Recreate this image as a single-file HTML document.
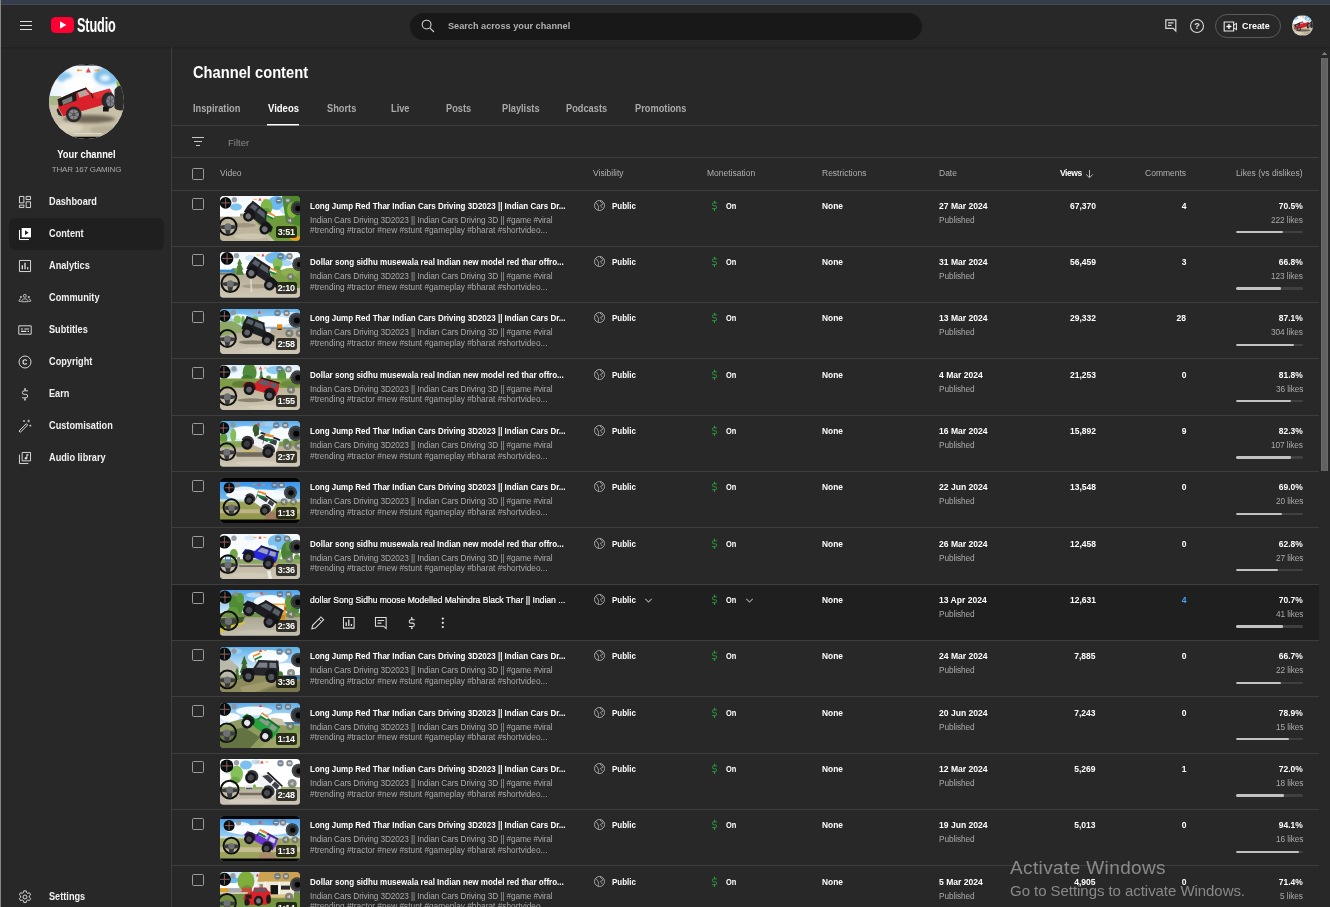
<!DOCTYPE html>
<html lang="en"><head><meta charset="utf-8"><title>Channel content - YouTube Studio</title>
<style>
*{box-sizing:border-box;margin:0;padding:0}
html,body{width:1330px;height:907px;overflow:hidden;background:#282828}
body{position:relative;font-family:"Liberation Sans",sans-serif;color:#fff;-webkit-font-smoothing:antialiased}
.abs{position:absolute}
#topstrip{position:absolute;left:0;top:0;width:1330px;height:4px;background:#353d4d}
#topline{position:absolute;left:0;top:4px;width:1330px;height:1px;background:#454a54}
#leftstrip{position:absolute;left:0;top:0;width:1px;height:907px;background:#858585}
#hdr{position:absolute;left:1px;top:5px;width:1329px;height:42px;background:#282828;box-shadow:0 1px 2px rgba(0,0,0,.25)}
#side{position:absolute;left:1px;top:47px;width:171px;height:860px;border-right:1px solid #3d3d3d}
.ham{position:absolute;left:20px;width:12px;height:1px;background:#e0e0e0}
#ytlogo{position:absolute;left:51px;top:17px;width:23px;height:16px}
#studio{position:absolute;left:76.500px;top:14px;font-weight:bold;font-size:19.500px;line-height:22px;transform-origin:0 50%;transform:scaleX(.65);letter-spacing:-.2px;white-space:nowrap}
#search{position:absolute;left:410px;top:13px;width:512px;height:27px;border-radius:13.5px;background:#181818}
#search span{position:absolute;left:37.500px;top:6.300px;font-size:9.600px;line-height:14px;color:#b0b0b0;font-weight:bold;white-space:nowrap;transform-origin:0 50%;transform:scaleX(.955)}
#create{position:absolute;left:1215px;top:14px;width:66px;height:23.500px;border:1px solid #5a5a5a;border-radius:12px}
#create span{position:absolute;left:25.700px;top:4px;font-size:9.500px;line-height:13px;font-weight:bold;transform-origin:0 50%;transform:scaleX(.94)}
.nav{position:absolute;left:49px;font-size:10px;line-height:14px;font-weight:bold;white-space:nowrap;color:#f1f1f1;transform-origin:0 50%;transform:scaleX(.918)}
.navic{position:absolute;left:17px;width:16px;height:16px}
#sel{position:absolute;left:8.500px;top:218px;width:155px;height:32px;border-radius:6px;background:#1f1f1f}
#yourch{position:absolute;left:1px;width:171px;text-align:center;top:148px;font-size:10px;line-height:14px;font-weight:bold;transform:scaleX(.931)}
#chname{position:absolute;left:1px;width:171px;text-align:center;top:163.500px;font-size:8px;line-height:11px;color:#aaa;letter-spacing:-.16px}
#h1{position:absolute;left:193px;top:61.800px;font-size:16.500px;line-height:21px;font-weight:bold;white-space:nowrap;transform-origin:0 50%;transform:scaleX(.89)}
.tab{position:absolute;top:102px;font-size:10px;line-height:14px;font-weight:bold;color:#aaa;white-space:nowrap;transform-origin:0 50%;transform:scaleX(.925)}
.tab.on{color:#fff}
.hl{position:absolute;left:172px;width:1147px;height:1px;background:#3e3e3e}
#tabul{position:absolute;left:267px;top:124px;width:32px;height:1px;background:#fff}
#tabul2{position:absolute;left:267px;top:125px;width:32px;height:1px;background:#9a9a9a}
#filter{position:absolute;left:228px;top:136px;font-size:9.5px;line-height:13px;color:#888;white-space:nowrap}
.ch{position:absolute;top:167.500px;font-size:8.500px;line-height:11px;color:#b0b0b0;white-space:nowrap}
.ch.r{text-align:right}
.row{position:absolute;left:172px;width:1147px;height:56.33px}
.rl{position:absolute;left:0;width:1147px;height:1px;background:#3e3e3e}
.hbg{position:absolute;left:0;width:1147px;background:#1f1f1f}
.cb{position:absolute;left:20px;top:8px;width:12px;height:12px;border:1px solid #9a9a9a;border-radius:1.500px}
.th{position:absolute;left:48px;top:6px;width:80px;height:45.330px;border-radius:4px;overflow:hidden;background:#888}
.th svg{position:absolute;left:0;top:0;width:80px;height:100%;display:block}
.dur{position:absolute;right:3.500px;bottom:3.500px;width:20.500px;height:12.200px;border-radius:2.500px;background:rgba(12,12,8,.78);color:#fff;font-size:9px;line-height:12.400px;font-weight:bold;text-align:center;letter-spacing:-.25px}
.ttl{position:absolute;left:138px;top:9.700px;font-size:9.800px;line-height:12px;font-weight:bold;white-space:nowrap;transform-origin:0 50%;transform:scaleX(0.813)}
.d1,.d2{position:absolute;left:138px;font-size:8.300px;line-height:10.670px;color:#aaa;white-space:nowrap}
.d1{top:24.750px;letter-spacing:-.12px}
.d2{top:35.250px}
.c{position:absolute;top:9.700px;font-size:9.800px;line-height:12px;font-weight:bold;white-space:nowrap;transform-origin:0 50%;transform:scaleX(0.854)}
.s{position:absolute;top:24.600px;font-size:8.300px;line-height:11px;color:#aaa;white-space:nowrap;letter-spacing:-.1px}
.vis{left:440px;transform:scaleX(0.811)}
.mon{left:554px;transform:scaleX(0.759)}
.res{left:650px}
.date{left:767px;transform:scaleX(0.875)}
.pub{left:767px}
.r{text-align:right;transform-origin:100% 50%}
.views{right:223px;transform:scaleX(0.868)}
.com{right:133px;transform:scaleX(0.868)}
.pct{right:16px;transform:scaleX(0.864)}
.lk{right:16px}
.blue{color:#3ea6ff}
.bar{position:absolute;left:1064px;top:41px;width:67px;height:2.200px;border-radius:1.200px;background:#404040;overflow:hidden}
.bar i{display:block;height:100%;background:#c2c2c2;border-radius:1.200px}
.ic-globe{position:absolute;left:421px;top:8.500px;width:13px;height:13px}
.ic-dol{position:absolute;left:536.300px;top:8.500px;width:13px;height:13px}
.chev{position:absolute;top:10.500px;width:11px;height:11px}
.hi{position:absolute;top:30.200px;width:15.600px;height:15.600px;margin-left:-1px}
#sbtrack{display:none}
#sbthumb{position:absolute;left:1321px;top:58px;width:7px;height:413px;background:#626262;box-shadow:inset 1px 0 0 #6c6c6c,inset -1px 0 0 #6c6c6c}
#wm1{position:absolute;left:1010px;top:856.200px;font-size:19px;line-height:24px;color:rgba(160,160,160,.8);white-space:nowrap;letter-spacing:.38px}
#wm2{position:absolute;left:1010px;top:881px;font-size:15px;line-height:20px;color:rgba(160,160,160,.8);white-space:nowrap;letter-spacing:-.05px}
.row.hov .ttl{font-weight:normal;-webkit-text-stroke:.22px #fff}
.s,.d1,.d2,.ch,#chname,#filter,#wm1,#wm2,.dur{transform:scaleX(.9995)}

</style></head><body>
<svg width="0" height="0" style="position:absolute"><defs><filter id="tb" x="-5%" y="-5%" width="110%" height="110%"><feGaussianBlur stdDeviation=".7"/></filter><filter id="tc" x="-5%" y="-5%" width="110%" height="110%"><feGaussianBlur stdDeviation=".25"/></filter></defs></svg>
<div id="hdr"></div>
<div id="side"></div>
<div id="topstrip"></div><div id="topline"></div><div id="leftstrip"></div>

<!-- header -->
<div class="ham" style="top:21px"></div><div class="ham" style="top:25px"></div><div class="ham" style="top:29px"></div>
<svg id="ytlogo" viewBox="0 0 23 16"><rect x="0" y="0" width="23" height="16" rx="4.500" ry="4.500" fill="#ff0033"/><path d="M9 4.300L15.300 8 9 11.700z" fill="#fff"/></svg>
<div id="studio">Studio</div>
<div id="search"><svg class="abs" style="left:9.700px;top:5.300px;width:16px;height:16px" viewBox="0 0 16 16"><circle cx="6.600" cy="6.600" r="4.400" fill="none" stroke="#d0d0d0" stroke-width="1.100"/><path d="M9.800 9.800L14 14" stroke="#d0d0d0" stroke-width="1.100"/></svg><span>Search across your channel</span></div>
<svg class="abs" style="left:1164px;top:18px;width:14px;height:15px" viewBox="0 0 14 15"><path d="M1.800 1.800h10v11.200l-2.600-2.600H1.800z" fill="none" stroke="#d8d8d8" stroke-width="1.200"/><path d="M4 4.800h5.500M4 7.300h3.500" stroke="#d8d8d8" stroke-width="1.200"/></svg>
<svg class="abs" style="left:1189px;top:18px;width:16px;height:16px;transform:scaleX(.9995)" viewBox="0 0 16 16"><circle cx="8" cy="8" r="6.500" fill="none" stroke="#d8d8d8" stroke-width="1.100"/><text x="8" y="11.200" text-anchor="middle" font-family="Liberation Sans, sans-serif" font-weight="bold" font-size="9" fill="#e0e0e0">?</text></svg>
<div id="create"><svg class="abs" style="left:7px;top:4.500px;width:15px;height:13px" viewBox="0 0 16 14"><path d="M1.200 2.200h10.200v9.600H1.200z" fill="none" stroke="#e8e8e8" stroke-width="1.200"/><path d="M11.400 5.500l3-1.800v6.600l-3-1.800" fill="none" stroke="#e8e8e8" stroke-width="1.100"/><path d="M6.300 4.300v5.400M3.600 7h5.400" stroke="#fff" stroke-width="1.400"/></svg><span>Create</span></div>
<svg class="abs" style="left:1291.500px;top:15.300px;width:21px;height:21px" viewBox="0 0 75 75"><use href="#avatar" width="75" height="75"/></svg>

<!-- sidebar -->
<svg class="abs" style="left:48.500px;top:63.500px;width:75px;height:75px" viewBox="0 0 75 75"><defs><clipPath id="avb"><circle cx="37.500" cy="37.500" r="37.500"/></clipPath><radialGradient id="sky0" cx=".45" cy=".35" r=".7"><stop offset="0" stop-color="#ffffff"/><stop offset=".55" stop-color="#eef6fb"/><stop offset="1" stop-color="#9fd0f0"/></radialGradient><filter id="bl" x="-10%" y="-10%" width="120%" height="120%"><feGaussianBlur stdDeviation="1.600"/></filter>
<symbol id="avatar" viewBox="0 0 75 75"><g clip-path="url(#avb)"><rect width="75" height="75" fill="url(#sky0)"/><g filter="url(#bl)"><ellipse cx="15" cy="13" rx="8" ry="5" fill="#8cc8ee"/><ellipse cx="58" cy="12" rx="13" ry="9" fill="#7fc0ec"/><ellipse cx="56" cy="14" rx="5" ry="3" fill="#e8f4fb"/><ellipse cx="30" cy="20" rx="16" ry="7" fill="#fff"/></g><rect y="34" width="75" height="41" fill="#c9c0a8"/><path d="M0 32h12v9H0z" fill="#a9b88c"/><path d="M67 18l5-3 3 8-6 2z" fill="#8fba3c"/><g filter="url(#bl)"><ellipse cx="40" cy="55" rx="26" ry="4" fill="#6f6656"/><ellipse cx="20" cy="64" rx="14" ry="5" fill="#d8d0ba"/><ellipse cx="55" cy="66" rx="14" ry="4" fill="#b8ae96"/></g><path d="M8.600 35.300L25.600 27.700 37 23.400 42.700 29.600 60.700 24.400 64 30.500 62 38 52 41.500 33 47 14.300 52.300 9.500 44z" fill="#d9202b"/><path d="M44 30l16-5 2 4-14 6z" fill="#e83a3a" opacity=".6"/><path d="M8.600 35.300L25.600 27.700 37 23.400 38 25 27 29.500 27.600 36.500 10.500 42.500z" fill="#1c1c1e"/><path d="M13 36.500l10-4.200.5 5-9.500 3.600z" fill="#7a7a78"/><path d="M28.500 28.500L36.500 25.500 40.500 30.500 30.500 33.800z" fill="#b9a29a"/><path d="M42 29l2 5" stroke="#222" stroke-width="1.200"/><path d="M9 44l-1.500 2 2 5 4 1.500z" fill="#222"/><circle cx="24.700" cy="50.400" r="7.800" fill="#29292b"/><circle cx="24.700" cy="50.400" r="5.200" fill="#8b8b8f"/><circle cx="24.700" cy="50.400" r="1.500" fill="#444"/><path d="M24.700 45.500v10M20 48l9.500 5M29.500 48L20 53" stroke="#555" stroke-width=".9"/><ellipse cx="59.500" cy="36.500" rx="7" ry="8.300" fill="#29292b"/><ellipse cx="61.500" cy="37" rx="4.300" ry="5.600" fill="#80838a"/><path d="M61.500 31.500v11M58 34l7 6M65 34l-7 6" stroke="#555" stroke-width=".8"/><path d="M54 43h5.700v4.600H54z" fill="#151515"/><path d="M65.500 26c2-4 5-5 9.500-4v24c-4 1-8 0-9.500-2z" fill="#2b2b29"/><path d="M28 6.300h5M45.500 6.300h5" stroke="#f39a1f" stroke-width="1.100"/><path d="M28 6.300l2-1.500v3zM50.700 6.300l-2-1.500v3z" fill="#f39a1f"/><path d="M39.400 3.800l2.600 4.800h-5.200z" fill="#e04a4a"/><path d="M24.700 69.600h28.500" stroke="#e8e8e8" stroke-width=".9" opacity=".8"/><path d="M0 0h75v1.500H0zM0 72.800h75V75H0z" fill="#0a0a0a"/></g></symbol></defs><use href="#avatar" width="75" height="75"/></svg>
<div id="yourch">Your channel</div>
<div id="chname">THAR 167 GAMING</div>
<div id="sel"></div>
<svg class="navic" style="top:194px" viewBox="0 0 24 24"><path d="M3.700 3.700h6.600v9.600H3.700zM13.700 3.700h6.600v4.600h-6.600zM13.700 11.700h6.600v8.600h-6.600zM3.700 16.700h6.600v3.600H3.700z" fill="none" stroke="#d6d6d6" stroke-width="1.500"/></svg><div class="nav" style="top:195.3px">Dashboard</div>
<svg class="navic" style="top:226px" viewBox="0 0 24 24"><path d="M7 3h14v14H7z" fill="#fff"/><path d="M12 6.500l5.500 3.500-5.500 3.500z" fill="#1f1f1f"/><path d="M3.700 6v14.300H18" fill="none" stroke="#fff" stroke-width="1.500"/></svg><div class="nav" style="top:227.3px">Content</div>
<svg class="navic" style="top:258px" viewBox="0 0 24 24"><path d="M3.700 3.700h16.600v16.600H3.700z" fill="none" stroke="#d6d6d6" stroke-width="1.500"/><path d="M8 17v-6M12 17V7M16 17v-3" stroke="#e0e0e0" stroke-width="2" fill="none"/></svg><div class="nav" style="top:259.3px">Analytics</div>
<svg class="navic" style="top:290px" viewBox="0 0 24 24"><g transform="translate(11.800 11.700) scale(.84) translate(-12 -12)"><circle cx="12" cy="8.500" r="2.600" fill="none" stroke="#d6d6d6" stroke-width="1.500"/><path d="M6.500 19c0-3.300 2.400-5.300 5.500-5.300s5.500 2 5.500 5.300z" fill="none" stroke="#d6d6d6" stroke-width="1.500"/><circle cx="5" cy="10.500" r="1.700" fill="#d6d6d6"/><circle cx="19" cy="10.500" r="1.700" fill="#d6d6d6"/><path d="M1.500 18c0-2.500 1.500-4 3.500-4M22.500 18c0-2.500-1.500-4-3.500-4M1.500 18.300h4M18.500 18.300h4" fill="none" stroke="#d6d6d6" stroke-width="1.500"/></g></svg><div class="nav" style="top:291.3px">Community</div>
<svg class="navic" style="top:322px" viewBox="0 0 24 24"><path d="M2.700 5.700h18.600v12.600H2.700z" fill="none" stroke="#d6d6d6" stroke-width="1.500"/><path d="M6 10.500h3M11 10.500h7M6 14h8M16 14h2" stroke="#e0e0e0" stroke-width="1.700"/></svg><div class="nav" style="top:323.3px">Subtitles</div>
<svg class="navic" style="top:354px" viewBox="0 0 24 24"><circle cx="12" cy="12" r="9" fill="none" stroke="#d6d6d6" stroke-width="1.500"/><path d="M14.600 10.300c-.5-1-1.400-1.600-2.600-1.600-1.800 0-3 1.400-3 3.300s1.200 3.300 3 3.300c1.200 0 2.100-.6 2.600-1.600" fill="none" stroke="#e6e6e6" stroke-width="1.700"/></svg><div class="nav" style="top:355.3px">Copyright</div>
<svg class="navic" style="top:386px" viewBox="0 0 24 24"><path d="M16.500 7.200H10.700a2.650 2.650 0 0 0 0 5.300h2.600a2.650 2.650 0 0 1 0 5.300H7.500M12 3.300v3.900M12 17.800v3.900" fill="none" stroke="#d6d6d6" stroke-width="1.500"/><path d="M10.300 5.200L12 3l1.700 2.200zM10.300 19.800L12 22l1.700-2.200z" fill="#d6d6d6"/></svg><div class="nav" style="top:387.3px">Earn</div>
<svg class="navic" style="top:418px" viewBox="0 0 24 24"><path d="M3 19.500L14 8.500l2 2L5 21.500z" fill="none" stroke="#d6d6d6" stroke-width="1.500"/><path d="M17.500 2.500v4M15.500 4.500h4M20 10v3M18.500 11.500h3M10.500 3v3M9 4.500h3" stroke="#d6d6d6" stroke-width="1.200" fill="none"/></svg><div class="nav" style="top:419.3px">Customisation</div>
<svg class="navic" style="top:450px" viewBox="0 0 24 24"><path d="M7.700 3.700h12.600v12.600H7.700z" fill="none" stroke="#d6d6d6" stroke-width="1.500"/><path d="M3.700 7v13.300H17" fill="none" stroke="#d6d6d6" stroke-width="1.500"/><path d="M14.800 6.500v5.500" stroke="#e0e0e0" stroke-width="1.500"/><path d="M14.800 6.500h2.400v1.800h-2.400z" fill="#e0e0e0"/><circle cx="13.400" cy="12.300" r="1.900" fill="#e0e0e0"/></svg><div class="nav" style="top:451.3px">Audio library</div>
<svg class="navic" style="top:888.5px" viewBox="0 0 24 24"><circle cx="12" cy="12" r="3" fill="none" stroke="#d6d6d6" stroke-width="1.500"/><path d="M10.200 2.800h3.600l.5 2.600 1.900 1.100 2.500-.9 1.800 3.100-2 1.700v2.200l2 1.700-1.800 3.100-2.500-.9-1.900 1.100-.5 2.600h-3.600l-.5-2.600-1.900-1.100-2.500.9-1.800-3.100 2-1.700v-2.200l-2-1.700 1.800-3.100 2.500.9 1.900-1.100z" fill="none" stroke="#d6d6d6" stroke-width="1.500"/></svg><div class="nav" style="top:889.8px">Settings</div>

<!-- main -->
<div id="h1">Channel content</div>
<div class="tab" style="left:193px">Inspiration</div>
<div class="tab on" style="left:267.700px;transform:scaleX(.95)">Videos</div>
<div class="tab" style="left:327px">Shorts</div>
<div class="tab" style="left:391px">Live</div>
<div class="tab" style="left:446px">Posts</div>
<div class="tab" style="left:502px">Playlists</div>
<div class="tab" style="left:566px">Podcasts</div>
<div class="tab" style="left:635px">Promotions</div>
<div class="hl" style="top:125px"></div>
<div id="tabul"></div><div id="tabul2"></div>
<svg class="abs" style="left:191px;top:136px;width:14px;height:12px" viewBox="0 0 14 12"><path d="M1 1.500h12M3 5.500h8M5 9.500h4" stroke="#c8c8c8" stroke-width="1.100"/></svg>
<div id="filter">Filter</div>
<div class="hl" style="top:157px"></div>
<span class="cb" style="left:192px;top:168px"></span>
<div class="ch" style="left:220px">Video</div>
<div class="ch" style="left:593px">Visibility</div>
<div class="ch" style="left:707px">Monetisation</div>
<div class="ch" style="left:822px">Restrictions</div>
<div class="ch" style="left:939px">Date</div>
<div class="ch" style="left:1060px;color:#fff;font-weight:bold;letter-spacing:-.45px">Views</div>
<svg class="abs" style="left:1085px;top:169px;width:9px;height:10px" viewBox="0 0 9 10"><path d="M4.500 1v7.500M1.200 5.400l3.300 3.300 3.300-3.300" fill="none" stroke="#bbb" stroke-width="1"/></svg>
<div class="ch r" style="right:144px">Comments</div>
<div class="ch r" style="right:27px">Likes (vs dislikes)</div>
<div class="row" style="top:190.00px"><i class="rl" style="top:0.00px"></i><span class="cb"></span><div class="th"><svg viewBox="0 0 80 45" preserveAspectRatio="none"><defs><linearGradient id="s0" x1="0" y1="0" x2="0" y2="1"><stop offset="0" stop-color="#f2f8fc"/><stop offset="1" stop-color="#ffffff"/></linearGradient><linearGradient id="g0" x1="0" y1="0" x2="0" y2="1"><stop offset="0" stop-color="#b3aa92"/><stop offset="1" stop-color="#c9c2ae"/></linearGradient></defs><g filter="url(#tb)"><rect x="0" y="0" width="80" height="22" fill="url(#s0)"/><rect x="0" y="20.5" width="80" height="24.5" fill="url(#g0)"/><ellipse cx="16" cy="11" rx="6" ry="3.5" fill="#7fc3ee"/><ellipse cx="57" cy="7" rx="9" ry="7" fill="#6db8ec"/><ellipse cx="66" cy="14" rx="6" ry="4" fill="#bfe0f5"/><ellipse cx="46.5" cy="11" rx="6" ry="8" fill="#7fb84a"/><ellipse cx="46" cy="17" rx="5" ry="5" fill="#5f9f3a"/><rect x="20" y="17.5" width="4" height="3" fill="#8a9a7a"/><path d="M30 22L80 18V45H55L40 30z" fill="#6f9c3c"/><path d="M62 0H80V30L66 26z" fill="#4d8a2c"/><ellipse cx="72" cy="14" rx="5" ry="8" fill="#86b53f"/><ellipse cx="70" cy="34" rx="8" ry="5" fill="#8aa83a"/><ellipse cx="76" cy="42" rx="6" ry="2.5" fill="#e8a21f"/><path d="M14 21H33L50 45H0V30z" fill="#bdb49c"/><ellipse cx="24" cy="29" rx="12" ry="2.2" fill="#8e846e" opacity="0.6"/><ellipse cx="30" cy="40" rx="16" ry="3" fill="#d4cdb8" opacity="0.7"/></g><g filter="url(#tc)"><g transform="translate(36.5 26.6) rotate(38.1) scale(1.120 1.120)"><path d="M-15 -1L-15.500 -7 -14.500 -13 1.500 -13 5.500 -7 14 -6 15.500 -1z" fill="#24262a"/><path d="M-14.700 -13.400H1.700L2.500 -12H-14.900z" fill="#24262a"/><path d="M-12.800 -11.500h5.300v4h-5.800zM-5.800 -11.500h6.300l2.800 4h-9.100z" fill="#59606a"/><path d="M-14.500 -1.500a5.300 5.300 0 0 1 10.600 0zM4 -1.500a5.300 5.300 0 0 1 10.600 0z" fill="#18181a" opacity=".85"/><circle cx="-9.250" cy="0" r="4.700" fill="#18181a"/><circle cx="-9.250" cy="0" r="2.500" fill="#6f7276"/><circle cx="9.250" cy="0" r="4.700" fill="#18181a"/><circle cx="9.250" cy="0" r="2.500" fill="#6f7276"/></g><g transform="translate(48.5 15.5) rotate(28) scale(0.95)"><path d="M0 0v9" stroke="#333" stroke-width=".5"/><rect x="0" y="0" width="8" height="1.800" fill="#f58a23"/><rect x="0" y="1.800" width="8" height="1.800" fill="#f4f4f4"/><rect x="0" y="3.600" width="8" height="1.800" fill="#128a3a"/></g></g><circle cx="5.6" cy="6.8" r="5.8" fill="#0c0c0c"/><path d="M1.0 6.8h9.2M5.6 2.2v9.2" stroke="#ddd" stroke-width=".45"/><circle cx="5.6" cy="6.8" r=".9" fill="#e22"/><circle cx="7.9" cy="30.1" r="8.6" fill="none" stroke="#0e0e0e" stroke-width="2"/><path d="M-0.2 29.6L5.4 28.6h5L16.0 29.6v2.600L10.7 33.1L9.7 38.2h-3.600L5.1 33.1L-0.2 32.2z" fill="#3a3b3e"/><circle cx="7.9" cy="30.6" r="3.5" fill="#6e7074"/><circle cx="77.5" cy="12" r="6.8" fill="#26282a" opacity=".92"/><circle cx="77.5" cy="12" r="5.6" fill="none" stroke="#7d8586" stroke-width=".7" stroke-dasharray="1 .8"/><circle cx="78.0" cy="12.3" r="2.7" fill="#050505"/><circle cx="69.9" cy="24.3" r="3.4" fill="#6f746c" opacity=".82"/><path d="M68.3 23.5h1.200l1.500-1.200v4l-1.500-1.200h-1.200z" fill="#d8d8d8" opacity=".8"/><circle cx="58.8" cy="4.4" r="3.200" fill="#5f7488" opacity=".85"/><path d="M57.1 4.4h3.400" stroke="#dde" stroke-width="1"/><circle cx="67.8" cy="4.4" r="3.200" fill="#70757a" opacity=".85"/><rect x="66.2" y="3.3" width="3.200" height="2.200" fill="#d5d8da" opacity=".85"/><circle cx="14.4" cy="3.8" r="2.700" fill="#8a9096" opacity=".85"/><path d="M33.5 3.3h3.200M43.3 3.3h3.200" stroke="#f59a23" stroke-width=".8"/><path d="M40 1.6l1.700 3.100h-3.400z" fill="#e8484e"/></svg><span class="dur">3:51</span></div><div class="ttl" style="transform:scaleX(0.8161)">Long Jump Red Thar Indian Cars Driving 3D2023 || Indian Cars Dr...</div><div class="d1">Indian Cars Driving 3D2023 || Indian Cars Driving 3D || #game #viral</div><div class="d2">#trending #tractor #new #stunt #gameplay #bharat #shortvideo...</div><svg class="ic-globe" viewBox="0 0 24 24"><circle cx="12" cy="12" r="9.3" fill="none" stroke="#c8c8c8" stroke-width="1.4"/><path d="M5 7.5c2 .5 3.5 1.5 3.5 3.5s2 1.5 2 3.5-1 2.5-.5 6M14 3.2c-.5 2 .5 3 2 3.500s3 2 1.500 3.500-3.500 0-3.500 2 2.500 2 3 4.500" fill="none" stroke="#c8c8c8" stroke-width="1.3"/></svg><span class="c vis">Public</span><svg class="ic-dol" viewBox="0 0 24 24"><path d="M16.500 7.200H10.700a2.650 2.650 0 0 0 0 5.300h2.600a2.650 2.650 0 0 1 0 5.300H7.500M12 3.300v3.900M12 17.800v3.900" fill="none" stroke="#2ba640" stroke-width="1.600"/><path d="M10.300 5.200L12 3l1.700 2.200zM10.300 19.800L12 22l1.700-2.200z" fill="#2ba640"/></svg><span class="c mon">On</span><span class="c res">None</span><span class="c date">27 Mar 2024</span><span class="s pub">Published</span><span class="c r views">67,370</span><span class="c r com">4</span><span class="c r pct">70.5%</span><span class="s r lk">222 likes</span><span class="bar"><i style="width:70.5%"></i></span></div>
<div class="row" style="top:246.33px"><i class="rl" style="top:-0.33px"></i><span class="cb"></span><div class="th"><svg viewBox="0 0 80 45" preserveAspectRatio="none"><defs><linearGradient id="s1" x1="0" y1="0" x2="0" y2="1"><stop offset="0" stop-color="#f4f9fd"/><stop offset="1" stop-color="#ffffff"/></linearGradient><linearGradient id="g1" x1="0" y1="0" x2="0" y2="1"><stop offset="0" stop-color="#b5ac94"/><stop offset="1" stop-color="#cfc8b4"/></linearGradient></defs><g filter="url(#tb)"><rect x="0" y="0" width="80" height="23" fill="url(#s1)"/><rect x="0" y="21.5" width="80" height="23.5" fill="url(#g1)"/><ellipse cx="56" cy="6" rx="11" ry="6" fill="#6db8ec"/><ellipse cx="66" cy="11" rx="6" ry="3" fill="#a8d6f3"/><ellipse cx="30" cy="6" rx="5" ry="3" fill="#cfe8f8"/><path d="M19.6 6.5L22.1 12.1L21.0 12.1L23.4 17.7L21.9 17.7L24.1 22.5L15.1 22.5L17.4 17.7L15.8 17.7L18.2 12.1L17.1 12.1z" fill="#4f7f38"/><ellipse cx="14" cy="19" rx="3" ry="3" fill="#6a9a44"/><ellipse cx="57.6" cy="11.7" rx="4.8" ry="6" fill="#86be52"/><ellipse cx="57" cy="17" rx="3.5" ry="3" fill="#5f9a3a"/><rect x="0" y="17.5" width="14.5" height="3" fill="#3a8cd0"/><rect x="0" y="20.5" width="15" height="2" fill="#7a7a70"/><path d="M50 19L80 15.500V36L62 34 52 24z" fill="#7fa047"/><ellipse cx="70" cy="20" rx="9" ry="4" fill="#8fb04f"/><ellipse cx="74" cy="30" rx="6" ry="5" fill="#6f9440"/><ellipse cx="36" cy="34" rx="14" ry="2.2" fill="#8e846e" opacity="0.55"/><path d="M30 24l1.500 0L32.500 40l-2 0z" fill="#e6e2d6" opacity="0.7"/></g><g filter="url(#tc)"><g transform="translate(40.4 26.9) rotate(32.9) scale(1.165 1.165)"><path d="M-15 -1L-15.500 -7 -14.500 -13 1.500 -13 5.500 -7 14 -6 15.500 -1z" fill="#222428"/><path d="M-14.700 -13.400H1.700L2.500 -12H-14.900z" fill="#222428"/><path d="M-12.800 -11.500h5.300v4h-5.800zM-5.800 -11.500h6.300l2.800 4h-9.100z" fill="#59606a"/><path d="M-14.500 -1.500a5.300 5.300 0 0 1 10.600 0zM4 -1.500a5.300 5.300 0 0 1 10.600 0z" fill="#18181a" opacity=".85"/><circle cx="-9.250" cy="0" r="4.700" fill="#18181a"/><circle cx="-9.250" cy="0" r="2.500" fill="#6f7276"/><circle cx="9.250" cy="0" r="4.700" fill="#18181a"/><circle cx="9.250" cy="0" r="2.500" fill="#6f7276"/></g><g transform="translate(50.5 15.5) rotate(22) scale(0.9)"><path d="M0 0v9" stroke="#333" stroke-width=".5"/><rect x="0" y="0" width="8" height="1.800" fill="#f58a23"/><rect x="0" y="1.800" width="8" height="1.800" fill="#f4f4f4"/><rect x="0" y="3.600" width="8" height="1.800" fill="#128a3a"/></g></g><circle cx="7.1" cy="6.4" r="6.3" fill="#0c0c0c"/><path d="M2.0 6.4h10.2M7.1 1.3v10.2" stroke="#ddd" stroke-width=".45"/><circle cx="7.1" cy="6.4" r=".9" fill="#e22"/><circle cx="10.3" cy="31" r="8.8" fill="none" stroke="#0e0e0e" stroke-width="2"/><path d="M2.0 30.5L7.8 29.5h5L18.6 30.5v2.600L13.1 34.0L12.1 39.3h-3.600L7.5 34.0L2.0 33.1z" fill="#3a3b3e"/><circle cx="10.3" cy="31.5" r="3.5" fill="#6e7074"/><circle cx="79" cy="12" r="6.8" fill="#26282a" opacity=".92"/><circle cx="79" cy="12" r="5.6" fill="none" stroke="#7d8586" stroke-width=".7" stroke-dasharray="1 .8"/><circle cx="79.5" cy="12.3" r="2.7" fill="#050505"/><circle cx="70.5" cy="24.5" r="3.4" fill="#6f746c" opacity=".82"/><path d="M68.9 23.7h1.200l1.500-1.200v4l-1.500-1.200h-1.200z" fill="#d8d8d8" opacity=".8"/><circle cx="60.5" cy="4.2" r="3.200" fill="#5f7488" opacity=".85"/><path d="M58.8 4.2h3.400" stroke="#dde" stroke-width="1"/><circle cx="69.5" cy="4.2" r="3.200" fill="#70757a" opacity=".85"/><rect x="67.9" y="3.1" width="3.200" height="2.200" fill="#d5d8da" opacity=".85"/><circle cx="16.5" cy="3.6" r="2.700" fill="#8a9096" opacity=".85"/><path d="M36.5 3h3.200M46.3 3h3.200" stroke="#f59a23" stroke-width=".8"/><path d="M43 1.3l1.700 3.100h-3.400z" fill="#e8484e"/></svg><span class="dur">2:10</span></div><div class="ttl" style="transform:scaleX(0.8193)">Dollar song sidhu musewala real Indian new model red thar offro...</div><div class="d1">Indian Cars Driving 3D2023 || Indian Cars Driving 3D || #game #viral</div><div class="d2">#trending #tractor #new #stunt #gameplay #bharat #shortvideo...</div><svg class="ic-globe" viewBox="0 0 24 24"><circle cx="12" cy="12" r="9.3" fill="none" stroke="#c8c8c8" stroke-width="1.4"/><path d="M5 7.5c2 .5 3.5 1.5 3.5 3.5s2 1.5 2 3.5-1 2.5-.5 6M14 3.2c-.5 2 .5 3 2 3.500s3 2 1.500 3.500-3.500 0-3.500 2 2.500 2 3 4.500" fill="none" stroke="#c8c8c8" stroke-width="1.3"/></svg><span class="c vis">Public</span><svg class="ic-dol" viewBox="0 0 24 24"><path d="M16.500 7.200H10.700a2.650 2.650 0 0 0 0 5.300h2.600a2.650 2.650 0 0 1 0 5.300H7.500M12 3.300v3.900M12 17.800v3.900" fill="none" stroke="#2ba640" stroke-width="1.600"/><path d="M10.300 5.200L12 3l1.700 2.200zM10.300 19.800L12 22l1.700-2.200z" fill="#2ba640"/></svg><span class="c mon">On</span><span class="c res">None</span><span class="c date">31 Mar 2024</span><span class="s pub">Published</span><span class="c r views">56,459</span><span class="c r com">3</span><span class="c r pct">66.8%</span><span class="s r lk">123 likes</span><span class="bar"><i style="width:66.8%"></i></span></div>
<div class="row" style="top:302.67px"><i class="rl" style="top:-0.67px"></i><span class="cb"></span><div class="th"><svg viewBox="0 0 80 45" preserveAspectRatio="none"><defs><linearGradient id="s2" x1="0" y1="0" x2="0" y2="1"><stop offset="0" stop-color="#5fb2ee"/><stop offset="1" stop-color="#eaf5fc"/></linearGradient><linearGradient id="g2" x1="0" y1="0" x2="0" y2="1"><stop offset="0" stop-color="#b4aa94"/><stop offset="1" stop-color="#cfc8b6"/></linearGradient></defs><g filter="url(#tb)"><rect x="0" y="0" width="80" height="20" fill="url(#s2)"/><rect x="0" y="18.5" width="80" height="26.5" fill="url(#g2)"/><ellipse cx="52" cy="12" rx="20" ry="5" fill="#ffffff" opacity="0.95"/><ellipse cx="20" cy="8" rx="9" ry="3" fill="#ffffff" opacity="0.8"/><ellipse cx="70" cy="6" rx="10" ry="3" fill="#e6f3fb" opacity="0.8"/><path d="M0 13L12 12 24 18 30 22 0 27z" fill="#8ea868"/><ellipse cx="17.3" cy="10.5" rx="3.6" ry="4" fill="#8cc060"/><ellipse cx="23" cy="11.5" rx="1.8" ry="4.5" fill="#7ab050"/><ellipse cx="35.4" cy="10.8" rx="3" ry="3.5" fill="#86bc5a"/><rect x="40" y="18.3" width="40" height="1.4" fill="#6f93b4"/><rect x="57" y="15.2" width="5.2" height="5.2" fill="#e8901a"/><rect x="57.5" y="19.5" width="4.2" height="1.3" fill="#3a2a1a"/><rect x="44.7" y="19.3" width="6" height="3.5" fill="#eeeeee"/><ellipse cx="32" cy="33" rx="13" ry="2" fill="#6e6656" opacity="0.75"/><ellipse cx="40" cy="41" rx="20" ry="3" fill="#d8d2c0" opacity="0.6"/></g><g filter="url(#tc)"><g transform="translate(37.1 27.2) rotate(21.0) scale(1.146 1.146)"><path d="M-15 -1L-15.500 -7 -14.500 -13 1.500 -13 5.500 -7 14 -6 15.500 -1z" fill="#1f2124"/><path d="M-14.700 -13.400H1.700L2.500 -12H-14.900z" fill="#1f2124"/><path d="M-12.800 -11.500h5.300v4h-5.800zM-5.800 -11.500h6.300l2.800 4h-9.100z" fill="#59606a"/><path d="M-14.500 -1.500a5.300 5.300 0 0 1 10.600 0zM4 -1.500a5.300 5.300 0 0 1 10.600 0z" fill="#18181a" opacity=".85"/><circle cx="-9.250" cy="0" r="4.700" fill="#18181a"/><circle cx="-9.250" cy="0" r="2.500" fill="#5f6266"/><circle cx="9.250" cy="0" r="4.700" fill="#18181a"/><circle cx="9.250" cy="0" r="2.500" fill="#5f6266"/></g></g><circle cx="4.4" cy="7" r="6" fill="#0c0c0c"/><path d="M-0.4 7h9.6M4.4 2.2v9.6" stroke="#ddd" stroke-width=".45"/><circle cx="4.4" cy="7" r=".9" fill="#e22"/><circle cx="7.4" cy="29.2" r="8.4" fill="none" stroke="#0e0e0e" stroke-width="2"/><path d="M-0.5 28.7L4.9 27.7h5L15.3 28.7v2.600L10.2 32.2L9.2 37.1h-3.600L4.6 32.2L-0.5 31.3z" fill="#3a3b3e"/><circle cx="7.4" cy="29.7" r="3.4" fill="#6e7074"/><circle cx="76.3" cy="11.1" r="7.5" fill="#26282a" opacity=".92"/><circle cx="76.3" cy="11.1" r="6.3" fill="none" stroke="#7d8586" stroke-width=".7" stroke-dasharray="1 .8"/><circle cx="76.8" cy="11.4" r="3.0" fill="#050505"/><circle cx="69.3" cy="24" r="4" fill="#6f746c" opacity=".82"/><path d="M67.7 23.2h1.200l1.500-1.200v4l-1.500-1.200h-1.200z" fill="#d8d8d8" opacity=".8"/><circle cx="79.8" cy="24" r="4" fill="#6f746c" opacity=".82"/><path d="M78.2 23.2h1.200l1.500-1.200v4l-1.500-1.200h-1.200z" fill="#d8d8d8" opacity=".8"/><circle cx="57.5" cy="4" r="3.200" fill="#5f7488" opacity=".85"/><path d="M55.8 4h3.400" stroke="#dde" stroke-width="1"/><circle cx="66.5" cy="4" r="3.200" fill="#70757a" opacity=".85"/><rect x="64.9" y="2.9" width="3.200" height="2.200" fill="#d5d8da" opacity=".85"/><circle cx="13.2" cy="3.6" r="2.700" fill="#8a9096" opacity=".85"/><path d="M32.8 3h3.200M42.6 3h3.200" stroke="#f59a23" stroke-width=".8"/><path d="M39.3 1.3l1.700 3.100h-3.400z" fill="#e8484e"/></svg><span class="dur">2:58</span></div><div class="ttl" style="transform:scaleX(0.8161)">Long Jump Red Thar Indian Cars Driving 3D2023 || Indian Cars Dr...</div><div class="d1">Indian Cars Driving 3D2023 || Indian Cars Driving 3D || #game #viral</div><div class="d2">#trending #tractor #new #stunt #gameplay #bharat #shortvideo...</div><svg class="ic-globe" viewBox="0 0 24 24"><circle cx="12" cy="12" r="9.3" fill="none" stroke="#c8c8c8" stroke-width="1.4"/><path d="M5 7.5c2 .5 3.5 1.5 3.5 3.5s2 1.5 2 3.5-1 2.5-.5 6M14 3.2c-.5 2 .5 3 2 3.500s3 2 1.500 3.500-3.500 0-3.500 2 2.500 2 3 4.500" fill="none" stroke="#c8c8c8" stroke-width="1.3"/></svg><span class="c vis">Public</span><svg class="ic-dol" viewBox="0 0 24 24"><path d="M16.500 7.200H10.700a2.650 2.650 0 0 0 0 5.300h2.600a2.650 2.650 0 0 1 0 5.300H7.500M12 3.300v3.900M12 17.800v3.900" fill="none" stroke="#2ba640" stroke-width="1.600"/><path d="M10.300 5.200L12 3l1.700 2.200zM10.300 19.800L12 22l1.700-2.200z" fill="#2ba640"/></svg><span class="c mon">On</span><span class="c res">None</span><span class="c date">13 Mar 2024</span><span class="s pub">Published</span><span class="c r views">29,332</span><span class="c r com">28</span><span class="c r pct">87.1%</span><span class="s r lk">304 likes</span><span class="bar"><i style="width:87.1%"></i></span></div>
<div class="row" style="top:359.00px"><i class="rl" style="top:-1.00px"></i><span class="cb"></span><div class="th"><svg viewBox="0 0 80 45" preserveAspectRatio="none"><defs><linearGradient id="s3" x1="0" y1="0" x2="0" y2="1"><stop offset="0" stop-color="#dff0fa"/><stop offset="1" stop-color="#ffffff"/></linearGradient><linearGradient id="g3" x1="0" y1="0" x2="0" y2="1"><stop offset="0" stop-color="#bfb59c"/><stop offset="1" stop-color="#cdc5b0"/></linearGradient></defs><g filter="url(#tb)"><rect x="0" y="0" width="80" height="17" fill="url(#s3)"/><rect x="0" y="21.5" width="80" height="23.5" fill="url(#g3)"/><ellipse cx="56" cy="5" rx="10" ry="4" fill="#8ecbf0"/><ellipse cx="12" cy="5" rx="6" ry="3" fill="#bfe0f5"/><ellipse cx="29.6" cy="7.6" rx="7" ry="9.5" fill="#4f8c3a"/><ellipse cx="27" cy="14" rx="6" ry="4" fill="#3f7a30"/><path d="M41.2 4L42.6 8.6L42.0 8.6L43.3 13.1L42.5 13.1L43.7 17L38.7 17L40.0 13.1L39.1 13.1L40.5 8.6L39.8 8.6z" fill="#4a8238"/><ellipse cx="61.7" cy="12" rx="4.5" ry="9" fill="#5a9a3e"/><ellipse cx="48.5" cy="13.5" rx="2.5" ry="3" fill="#5f9440"/><ellipse cx="72" cy="14" rx="3" ry="3" fill="#7aa850"/><rect x="0" y="13.4" width="80" height="9.4" fill="#7f9c48"/><ellipse cx="20" cy="19" rx="8" ry="3" fill="#5f7f34"/><ellipse cx="50" cy="17" rx="12" ry="2.5" fill="#95b055"/><ellipse cx="70" cy="19" rx="10" ry="3" fill="#6b8c3c"/><ellipse cx="31" cy="35" rx="13.5" ry="1.9" fill="#6e6656" opacity="0.7"/><ellipse cx="50" cy="42" rx="22" ry="2.5" fill="#d8d2c0" opacity="0.6"/></g><g filter="url(#tc)"><g transform="translate(39.2 27.4) rotate(16.1) scale(-1.148 1.148)"><path d="M-15 -1L-15.500 -7 -14.500 -13 1.500 -13 5.500 -7 14 -6 15.500 -1z" fill="#d2222c"/><path d="M-14.700 -13.400H1.700L2.500 -12H-14.900z" fill="#1a1a1c"/><path d="M-12.800 -11.500h5.300v4h-5.800zM-5.800 -11.500h6.300l2.800 4h-9.100z" fill="#59606a"/><path d="M-14.500 -1.500a5.300 5.300 0 0 1 10.600 0zM4 -1.500a5.300 5.300 0 0 1 10.600 0z" fill="#18181a" opacity=".85"/><circle cx="-9.250" cy="0" r="4.700" fill="#18181a"/><circle cx="-9.250" cy="0" r="2.500" fill="#5f6266"/><circle cx="9.250" cy="0" r="4.700" fill="#18181a"/><circle cx="9.250" cy="0" r="2.500" fill="#5f6266"/></g></g><circle cx="3.9" cy="7" r="6.5" fill="#0c0c0c"/><path d="M-1.4 7h10.6M3.9 1.7v10.6" stroke="#ddd" stroke-width=".45"/><circle cx="3.9" cy="7" r=".9" fill="#e22"/><circle cx="7.4" cy="31" r="8.8" fill="none" stroke="#0e0e0e" stroke-width="2"/><path d="M-0.9 30.5L4.9 29.5h5L15.7 30.5v2.600L10.2 34.0L9.2 39.3h-3.600L4.6 34.0L-0.9 33.1z" fill="#3a3b3e"/><circle cx="7.4" cy="31.5" r="3.5" fill="#6e7074"/><circle cx="77.5" cy="12.3" r="7" fill="#26282a" opacity=".92"/><circle cx="77.5" cy="12.3" r="5.8" fill="none" stroke="#7d8586" stroke-width=".7" stroke-dasharray="1 .8"/><circle cx="78.0" cy="12.6" r="2.8" fill="#050505"/><circle cx="71" cy="24.5" r="4" fill="#6f746c" opacity=".82"/><path d="M69.4 23.7h1.200l1.500-1.200v4l-1.500-1.200h-1.200z" fill="#d8d8d8" opacity=".8"/><circle cx="59.5" cy="4.3" r="3.200" fill="#5f7488" opacity=".85"/><path d="M57.8 4.3h3.400" stroke="#dde" stroke-width="1"/><circle cx="68.5" cy="4.3" r="3.200" fill="#70757a" opacity=".85"/><rect x="66.9" y="3.2" width="3.200" height="2.200" fill="#d5d8da" opacity=".85"/><circle cx="14" cy="3.8" r="2.700" fill="#8a9096" opacity=".85"/><path d="M34.0 3h3.200M43.8 3h3.200" stroke="#f59a23" stroke-width=".8"/><path d="M40.5 1.3l1.700 3.100h-3.400z" fill="#e8484e"/></svg><span class="dur">1:55</span></div><div class="ttl" style="transform:scaleX(0.8193)">Dollar song sidhu musewala real Indian new model red thar offro...</div><div class="d1">Indian Cars Driving 3D2023 || Indian Cars Driving 3D || #game #viral</div><div class="d2">#trending #tractor #new #stunt #gameplay #bharat #shortvideo...</div><svg class="ic-globe" viewBox="0 0 24 24"><circle cx="12" cy="12" r="9.3" fill="none" stroke="#c8c8c8" stroke-width="1.4"/><path d="M5 7.5c2 .5 3.5 1.5 3.5 3.5s2 1.5 2 3.5-1 2.5-.5 6M14 3.2c-.5 2 .5 3 2 3.500s3 2 1.500 3.500-3.500 0-3.500 2 2.500 2 3 4.500" fill="none" stroke="#c8c8c8" stroke-width="1.3"/></svg><span class="c vis">Public</span><svg class="ic-dol" viewBox="0 0 24 24"><path d="M16.500 7.200H10.700a2.650 2.650 0 0 0 0 5.300h2.600a2.650 2.650 0 0 1 0 5.300H7.500M12 3.300v3.900M12 17.800v3.900" fill="none" stroke="#2ba640" stroke-width="1.600"/><path d="M10.300 5.200L12 3l1.700 2.200zM10.300 19.800L12 22l1.700-2.200z" fill="#2ba640"/></svg><span class="c mon">On</span><span class="c res">None</span><span class="c date">4 Mar 2024</span><span class="s pub">Published</span><span class="c r views">21,253</span><span class="c r com">0</span><span class="c r pct">81.8%</span><span class="s r lk">36 likes</span><span class="bar"><i style="width:81.8%"></i></span></div>
<div class="row" style="top:415.33px"><i class="rl" style="top:-0.33px"></i><span class="cb"></span><div class="th"><svg viewBox="0 0 80 45" preserveAspectRatio="none"><defs><linearGradient id="s4" x1="0" y1="0" x2="0" y2="1"><stop offset="0" stop-color="#58aeee"/><stop offset="1" stop-color="#f4fafd"/></linearGradient><linearGradient id="g4" x1="0" y1="0" x2="0" y2="1"><stop offset="0" stop-color="#b8ae96"/><stop offset="1" stop-color="#cfc8b6"/></linearGradient></defs><g filter="url(#tb)"><rect x="0" y="0" width="80" height="24" fill="url(#s4)"/><rect x="0" y="24" width="80" height="21" fill="url(#g4)"/><ellipse cx="26" cy="12" rx="16" ry="7" fill="#ffffff" opacity="0.95"/><ellipse cx="62" cy="12" rx="12" ry="6" fill="#ffffff" opacity="0.9"/><ellipse cx="50" cy="3" rx="10" ry="2.5" fill="#9fd2f4" opacity="0.8"/><ellipse cx="3.5" cy="17" rx="4" ry="5" fill="#5f9a3e"/><ellipse cx="13.2" cy="14" rx="3" ry="6.5" fill="#86bc5a"/><ellipse cx="36" cy="8.2" rx="3.3" ry="5" fill="#3d5f2c"/><ellipse cx="36.5" cy="13" rx="2.5" ry="3" fill="#35552a"/><path d="M0 20H30L26 26H0z" fill="#86a552"/><path d="M54 21L80 18.500V25H56z" fill="#7f9f4e"/><ellipse cx="66" cy="20" rx="3" ry="2.5" fill="#5f8a3a"/><path d="M15 31H50V35.600H17z" fill="#5c5648" opacity="0.8"/><path d="M22 28.500h14v1.400H22z" fill="#d8c83a" opacity="0.8"/><ellipse cx="40" cy="42" rx="24" ry="2.6" fill="#dcd6c4" opacity="0.6"/></g><g filter="url(#tc)"><g transform="translate(37.5 26.9) rotate(21.3) scale(-1.219 1.219)"><path d="M-15 -1L-15.500 -7 -14.500 -13 1.500 -13 5.500 -7 14 -6 15.500 -1z" fill="#f2f3f4"/><path d="M-14.700 -13.400H1.700L2.500 -12H-14.900z" fill="#1a1a1c"/><path d="M-12.800 -11.500h5.300v4h-5.800zM-5.800 -11.500h6.300l2.800 4h-9.100z" fill="#3c4048"/><path d="M-14.500 -1.500a5.300 5.300 0 0 1 10.600 0zM4 -1.500a5.300 5.300 0 0 1 10.600 0z" fill="#18181a" opacity=".85"/><circle cx="-9.250" cy="0" r="4.700" fill="#18181a"/><circle cx="-9.250" cy="0" r="2.500" fill="#3a3b3e"/><circle cx="9.250" cy="0" r="4.700" fill="#18181a"/><circle cx="9.250" cy="0" r="2.500" fill="#3a3b3e"/></g><g transform="translate(45 12.5) rotate(12) scale(1.15)"><path d="M0 0v9" stroke="#333" stroke-width=".5"/><rect x="0" y="0" width="8" height="1.800" fill="#f58a23"/><rect x="0" y="1.800" width="8" height="1.800" fill="#f4f4f4"/><rect x="0" y="3.600" width="8" height="1.800" fill="#128a3a"/></g></g><circle cx="3.3" cy="7" r="6" fill="#0c0c0c"/><path d="M-1.5 7h9.6M3.3 2.2v9.6" stroke="#ddd" stroke-width=".45"/><circle cx="3.3" cy="7" r=".9" fill="#e22"/><circle cx="6.8" cy="30.4" r="8.4" fill="none" stroke="#0e0e0e" stroke-width="2"/><path d="M-1.1 29.9L4.3 28.9h5L14.7 29.9v2.600L9.6 33.4L8.6 38.3h-3.600L4.0 33.4L-1.1 32.5z" fill="#3a3b3e"/><circle cx="6.8" cy="30.9" r="3.4" fill="#6e7074"/><circle cx="75.7" cy="12.3" r="7.5" fill="#26282a" opacity=".92"/><circle cx="75.7" cy="12.3" r="6.3" fill="none" stroke="#7d8586" stroke-width=".7" stroke-dasharray="1 .8"/><circle cx="76.2" cy="12.6" r="3.0" fill="#050505"/><circle cx="67.5" cy="24.5" r="4.3" fill="#6f746c" opacity=".82"/><path d="M65.9 23.7h1.200l1.500-1.200v4l-1.500-1.200h-1.200z" fill="#d8d8d8" opacity=".8"/><circle cx="78.6" cy="24.5" r="4.3" fill="#6f746c" opacity=".82"/><path d="M77.0 23.7h1.200l1.500-1.200v4l-1.500-1.200h-1.200z" fill="#d8d8d8" opacity=".8"/><circle cx="56.3" cy="4.2" r="3.200" fill="#5f7488" opacity=".85"/><path d="M54.6 4.2h3.400" stroke="#dde" stroke-width="1"/><circle cx="65.3" cy="4.2" r="3.200" fill="#70757a" opacity=".85"/><rect x="63.7" y="3.1" width="3.200" height="2.200" fill="#d5d8da" opacity=".85"/><circle cx="13" cy="3.8" r="2.700" fill="#8a9096" opacity=".85"/><path d="M32.0 3h3.200M41.8 3h3.200" stroke="#f59a23" stroke-width=".8"/><path d="M38.5 1.3l1.700 3.100h-3.400z" fill="#e8484e"/></svg><span class="dur">2:37</span></div><div class="ttl" style="transform:scaleX(0.8161)">Long Jump Red Thar Indian Cars Driving 3D2023 || Indian Cars Dr...</div><div class="d1">Indian Cars Driving 3D2023 || Indian Cars Driving 3D || #game #viral</div><div class="d2">#trending #tractor #new #stunt #gameplay #bharat #shortvideo...</div><svg class="ic-globe" viewBox="0 0 24 24"><circle cx="12" cy="12" r="9.3" fill="none" stroke="#c8c8c8" stroke-width="1.4"/><path d="M5 7.5c2 .5 3.5 1.5 3.5 3.5s2 1.5 2 3.5-1 2.5-.5 6M14 3.2c-.5 2 .5 3 2 3.500s3 2 1.500 3.500-3.500 0-3.500 2 2.500 2 3 4.500" fill="none" stroke="#c8c8c8" stroke-width="1.3"/></svg><span class="c vis">Public</span><svg class="ic-dol" viewBox="0 0 24 24"><path d="M16.500 7.200H10.700a2.650 2.650 0 0 0 0 5.300h2.600a2.650 2.650 0 0 1 0 5.300H7.500M12 3.300v3.900M12 17.800v3.900" fill="none" stroke="#2ba640" stroke-width="1.600"/><path d="M10.300 5.200L12 3l1.700 2.200zM10.300 19.800L12 22l1.700-2.200z" fill="#2ba640"/></svg><span class="c mon">On</span><span class="c res">None</span><span class="c date">16 Mar 2024</span><span class="s pub">Published</span><span class="c r views">15,892</span><span class="c r com">9</span><span class="c r pct">82.3%</span><span class="s r lk">107 likes</span><span class="bar"><i style="width:82.3%"></i></span></div>
<div class="row" style="top:471.67px"><i class="rl" style="top:-0.67px"></i><span class="cb"></span><div class="th"><svg viewBox="0 0 80 45" preserveAspectRatio="none"><defs><linearGradient id="s5" x1="0" y1="0" x2="0" y2="1"><stop offset="0" stop-color="#2f8fe6"/><stop offset="1" stop-color="#7cc0f2"/></linearGradient><linearGradient id="g5" x1="0" y1="0" x2="0" y2="1"><stop offset="0" stop-color="#9da258"/><stop offset="1" stop-color="#8e9648"/></linearGradient></defs><g filter="url(#tb)"><rect x="0" y="0" width="80" height="25" fill="url(#s5)"/><rect x="0" y="23" width="80" height="22" fill="url(#g5)"/><ellipse cx="40" cy="17" rx="34" ry="5.5" fill="#ffffff" opacity="0.95"/><ellipse cx="24" cy="12" rx="12" ry="3.5" fill="#ffffff" opacity="0.85"/><ellipse cx="64" cy="13" rx="10" ry="3" fill="#eaf5fc" opacity="0.8"/><rect x="0" y="21" width="80" height="2.5" fill="#dfe8e0" opacity="0.8"/><path d="M0 31H48L52 35H0z" fill="#c7b98e" opacity="0.85"/><path d="M56 31H80V35H58z" fill="#c7b98e" opacity="0.7"/></g><g filter="url(#tc)"><g transform="translate(36.9 27.2) rotate(33.8) scale(-1.021 1.021)"><path d="M-15 -1L-15.500 -7 -14.500 -13 1.500 -13 5.500 -7 14 -6 15.500 -1z" fill="#f2f3f4"/><path d="M-14.700 -13.400H1.700L2.500 -12H-14.900z" fill="#1a1a1c"/><path d="M-12.800 -11.500h5.300v4h-5.800zM-5.800 -11.500h6.300l2.800 4h-9.100z" fill="#3c4048"/><path d="M-14.500 -1.500a5.300 5.300 0 0 1 10.600 0zM4 -1.500a5.300 5.300 0 0 1 10.600 0z" fill="#18181a" opacity=".85"/><circle cx="-9.250" cy="0" r="4.700" fill="#18181a"/><circle cx="-9.250" cy="0" r="2.500" fill="#4a4b4e"/><circle cx="9.250" cy="0" r="4.700" fill="#18181a"/><circle cx="9.250" cy="0" r="2.500" fill="#4a4b4e"/></g><g transform="translate(38.5 12.5) rotate(18) scale(1.05)"><path d="M0 0v9" stroke="#333" stroke-width=".5"/><rect x="0" y="0" width="8" height="1.800" fill="#f58a23"/><rect x="0" y="1.800" width="8" height="1.800" fill="#f4f4f4"/><rect x="0" y="3.600" width="8" height="1.800" fill="#128a3a"/></g><path d="M46 36l6-3 5 2 0 7h-13z" fill="#a07a5c"/></g><circle cx="9.1" cy="9.7" r="5.5" fill="#0c0c0c"/><path d="M4.8 9.7h8.6M9.1 5.4v8.6" stroke="#ddd" stroke-width=".45"/><circle cx="9.1" cy="9.7" r=".9" fill="#e22"/><circle cx="11.4" cy="29" r="7.800000000000001" fill="none" stroke="#0e0e0e" stroke-width="2"/><path d="M4.1 28.5L8.9 27.5h5L18.7 28.5v2.600L14.2 32.0L13.2 36.3h-3.600L8.6 32.0L4.1 31.1z" fill="#3a3b3e"/><circle cx="11.4" cy="29.5" r="3.2" fill="#6e7074"/><circle cx="70.4" cy="14.4" r="6.5" fill="#26282a" opacity=".92"/><circle cx="70.4" cy="14.4" r="5.3" fill="none" stroke="#7d8586" stroke-width=".7" stroke-dasharray="1 .8"/><circle cx="70.9" cy="14.7" r="2.6" fill="#050505"/><circle cx="64" cy="23.7" r="3.5" fill="#6f746c" opacity=".82"/><path d="M62.4 22.9h1.200l1.500-1.200v4l-1.500-1.200h-1.200z" fill="#d8d8d8" opacity=".8"/><circle cx="73.4" cy="23.7" r="3.5" fill="#6f746c" opacity=".82"/><path d="M71.8 22.9h1.200l1.500-1.200v4l-1.500-1.200h-1.200z" fill="#d8d8d8" opacity=".8"/><circle cx="54.5" cy="7" r="3.200" fill="#5f7488" opacity=".85"/><path d="M52.8 7h3.400" stroke="#dde" stroke-width="1"/><circle cx="61.5" cy="7" r="3.200" fill="#70757a" opacity=".85"/><rect x="59.9" y="5.9" width="3.200" height="2.200" fill="#d5d8da" opacity=".85"/><circle cx="17.5" cy="6.8" r="2.700" fill="#8a9096" opacity=".85"/><path d="M32.5 6.4h3.200M42.3 6.4h3.200" stroke="#f59a23" stroke-width=".8"/><path d="M39 4.7l1.700 3.100h-3.400z" fill="#e8484e"/><rect x="0" y="0" width="80" height="3.9" fill="#050505"/><rect x="0" y="41.2" width="80" height="3.8" fill="#050505"/></svg><span class="dur">1:13</span></div><div class="ttl" style="transform:scaleX(0.8161)">Long Jump Red Thar Indian Cars Driving 3D2023 || Indian Cars Dr...</div><div class="d1">Indian Cars Driving 3D2023 || Indian Cars Driving 3D || #game #viral</div><div class="d2">#trending #tractor #new #stunt #gameplay #bharat #shortvideo...</div><svg class="ic-globe" viewBox="0 0 24 24"><circle cx="12" cy="12" r="9.3" fill="none" stroke="#c8c8c8" stroke-width="1.4"/><path d="M5 7.5c2 .5 3.5 1.5 3.5 3.5s2 1.5 2 3.5-1 2.5-.5 6M14 3.2c-.5 2 .5 3 2 3.500s3 2 1.500 3.500-3.500 0-3.500 2 2.500 2 3 4.500" fill="none" stroke="#c8c8c8" stroke-width="1.3"/></svg><span class="c vis">Public</span><svg class="ic-dol" viewBox="0 0 24 24"><path d="M16.500 7.200H10.700a2.650 2.650 0 0 0 0 5.300h2.600a2.650 2.650 0 0 1 0 5.300H7.500M12 3.300v3.900M12 17.800v3.900" fill="none" stroke="#2ba640" stroke-width="1.600"/><path d="M10.300 5.200L12 3l1.700 2.200zM10.300 19.800L12 22l1.700-2.200z" fill="#2ba640"/></svg><span class="c mon">On</span><span class="c res">None</span><span class="c date">22 Jun 2024</span><span class="s pub">Published</span><span class="c r views">13,548</span><span class="c r com">0</span><span class="c r pct">69.0%</span><span class="s r lk">20 likes</span><span class="bar"><i style="width:69.0%"></i></span></div>
<div class="row" style="top:528.00px"><i class="rl" style="top:-1.00px"></i><span class="cb"></span><div class="th"><svg viewBox="0 0 80 45" preserveAspectRatio="none"><defs><linearGradient id="s6" x1="0" y1="0" x2="0" y2="1"><stop offset="0" stop-color="#f4f9fd"/><stop offset="1" stop-color="#ffffff"/></linearGradient><linearGradient id="g6" x1="0" y1="0" x2="0" y2="1"><stop offset="0" stop-color="#bdb5a0"/><stop offset="1" stop-color="#cdc6b4"/></linearGradient></defs><g filter="url(#tb)"><rect x="0" y="0" width="80" height="27" fill="url(#s6)"/><rect x="0" y="26" width="80" height="19" fill="url(#g6)"/><ellipse cx="60" cy="8" rx="12" ry="8" fill="#7cc0f0"/><ellipse cx="52" cy="14" rx="5" ry="3" fill="#cfe8f8"/><ellipse cx="30" cy="4" rx="6" ry="2.5" fill="#d8ecf9"/><ellipse cx="13.8" cy="20" rx="4" ry="5" fill="#6fa848"/><ellipse cx="25" cy="26" rx="2" ry="2" fill="#4f8a3a"/><ellipse cx="58.8" cy="21" rx="2.2" ry="5.5" fill="#9fcc70"/><ellipse cx="67" cy="18" rx="6" ry="10" fill="#4a8234"/><ellipse cx="69" cy="12" rx="3.5" ry="5" fill="#5a9440"/><ellipse cx="77" cy="24" rx="3" ry="4" fill="#5f9440"/><rect x="0" y="25" width="80" height="4.5" fill="#8aa860"/><rect x="5" y="22" width="6" height="5" fill="#4a88c8"/><rect x="6" y="23" width="4" height="2" fill="#e8eef4"/><rect x="17" y="23" width="3" height="4" fill="#8a8a84"/><path d="M18 31H56V32.800H20z" fill="#5c5648" opacity="0.75"/><path d="M47 36.500l3.500 0 1.500 8h-3.500z" fill="#f0efe8" opacity="0.9"/><ellipse cx="30" cy="41" rx="18" ry="2.5" fill="#d8d2c0" opacity="0.55"/></g><g filter="url(#tc)"><g transform="translate(38.2 26.3) rotate(18.3) scale(-1.138 1.138)"><path d="M-15 -1L-15.500 -7 -14.500 -13 1.500 -13 5.500 -7 14 -6 15.500 -1z" fill="#2626dc"/><path d="M-14.700 -13.400H1.700L2.500 -12H-14.900z" fill="#1a1a2a"/><path d="M-12.800 -11.500h5.300v4h-5.800zM-5.800 -11.500h6.300l2.800 4h-9.100z" fill="#9aa0b8"/><path d="M-14.500 -1.500a5.300 5.300 0 0 1 10.600 0zM4 -1.500a5.300 5.300 0 0 1 10.600 0z" fill="#18181a" opacity=".85"/><circle cx="-9.250" cy="0" r="4.700" fill="#18181a"/><circle cx="-9.250" cy="0" r="2.500" fill="#4a4b52"/><circle cx="9.250" cy="0" r="4.700" fill="#18181a"/><circle cx="9.250" cy="0" r="2.500" fill="#4a4b52"/></g><rect x="54" y="28.5" width="1.8" height="2.8" fill="#e8901a"/></g><circle cx="4.4" cy="8" r="6.5" fill="#0c0c0c"/><path d="M-0.9 8h10.6M4.4 2.7v10.6" stroke="#ddd" stroke-width=".45"/><circle cx="4.4" cy="8" r=".9" fill="#e22"/><circle cx="8" cy="30" r="8.8" fill="none" stroke="#0e0e0e" stroke-width="2"/><path d="M-0.3 29.5L5.5 28.5h5L16.3 29.5v2.600L10.8 33.0L9.8 38.3h-3.600L5.2 33.0L-0.3 32.1z" fill="#3a3b3e"/><circle cx="8" cy="30.5" r="3.5" fill="#6e7074"/><circle cx="76.3" cy="12.6" r="7" fill="#26282a" opacity=".92"/><circle cx="76.3" cy="12.6" r="5.8" fill="none" stroke="#7d8586" stroke-width=".7" stroke-dasharray="1 .8"/><circle cx="76.8" cy="12.9" r="2.8" fill="#050505"/><circle cx="69.3" cy="24.9" r="4" fill="#6f746c" opacity=".82"/><path d="M67.7 24.1h1.200l1.500-1.200v4l-1.500-1.200h-1.200z" fill="#d8d8d8" opacity=".8"/><circle cx="58" cy="4.6" r="3.200" fill="#5f7488" opacity=".85"/><path d="M56.3 4.6h3.400" stroke="#dde" stroke-width="1"/><circle cx="67" cy="4.6" r="3.200" fill="#70757a" opacity=".85"/><rect x="65.4" y="3.5" width="3.200" height="2.200" fill="#d5d8da" opacity=".85"/><circle cx="14" cy="4.2" r="2.700" fill="#8a9096" opacity=".85"/><path d="M33.5 3.4h3.200M43.3 3.4h3.200" stroke="#f59a23" stroke-width=".8"/><path d="M40 1.7l1.700 3.100h-3.400z" fill="#e8484e"/></svg><span class="dur">3:36</span></div><div class="ttl" style="transform:scaleX(0.8193)">Dollar song sidhu musewala real Indian new model red thar offro...</div><div class="d1">Indian Cars Driving 3D2023 || Indian Cars Driving 3D || #game #viral</div><div class="d2">#trending #tractor #new #stunt #gameplay #bharat #shortvideo...</div><svg class="ic-globe" viewBox="0 0 24 24"><circle cx="12" cy="12" r="9.3" fill="none" stroke="#c8c8c8" stroke-width="1.4"/><path d="M5 7.5c2 .5 3.5 1.5 3.5 3.5s2 1.5 2 3.5-1 2.5-.5 6M14 3.2c-.5 2 .5 3 2 3.500s3 2 1.500 3.500-3.500 0-3.500 2 2.500 2 3 4.500" fill="none" stroke="#c8c8c8" stroke-width="1.3"/></svg><span class="c vis">Public</span><svg class="ic-dol" viewBox="0 0 24 24"><path d="M16.500 7.200H10.700a2.650 2.650 0 0 0 0 5.300h2.600a2.650 2.650 0 0 1 0 5.300H7.500M12 3.300v3.900M12 17.800v3.900" fill="none" stroke="#2ba640" stroke-width="1.600"/><path d="M10.300 5.200L12 3l1.700 2.200zM10.300 19.800L12 22l1.700-2.200z" fill="#2ba640"/></svg><span class="c mon">On</span><span class="c res">None</span><span class="c date">26 Mar 2024</span><span class="s pub">Published</span><span class="c r views">12,458</span><span class="c r com">0</span><span class="c r pct">62.8%</span><span class="s r lk">27 likes</span><span class="bar"><i style="width:62.8%"></i></span></div>
<div class="row hov" style="top:584.33px"><i class="hbg" style="top:0.67px;height:55px"></i><i class="rl" style="top:-0.33px"></i><span class="cb"></span><div class="th"><svg viewBox="0 0 80 45" preserveAspectRatio="none"><defs><linearGradient id="s7" x1="0" y1="0" x2="0" y2="1"><stop offset="0" stop-color="#4fa4ea"/><stop offset="1" stop-color="#d8ecf9"/></linearGradient><linearGradient id="g7" x1="0" y1="0" x2="0" y2="1"><stop offset="0" stop-color="#aaa493"/><stop offset="1" stop-color="#c4beac"/></linearGradient></defs><g filter="url(#tb)"><rect x="0" y="0" width="80" height="23" fill="url(#s7)"/><rect x="0" y="26" width="80" height="19" fill="url(#g7)"/><ellipse cx="50" cy="12" rx="16" ry="7" fill="#ffffff" opacity="0.95"/><ellipse cx="34" cy="5" rx="8" ry="2.5" fill="#cfe8f8" opacity="0.7"/><ellipse cx="16.5" cy="14" rx="7.5" ry="11.5" fill="#4f8c34"/><ellipse cx="13" cy="22" rx="6" ry="5" fill="#5f9a3c"/><ellipse cx="20" cy="8" rx="4" ry="5" fill="#5a9838"/><ellipse cx="69.3" cy="14" rx="4.6" ry="9" fill="#5f9a3c"/><ellipse cx="75" cy="20" rx="4" ry="5" fill="#4f8a34"/><rect x="0" y="23" width="80" height="4" fill="#6f9444"/><path d="M47 13.500H65.800V30.500H47z" fill="#e9a334"/><path d="M49 15H64V22H49z" fill="#f4efe2"/><g transform="translate(51 15.5) rotate(10) scale(0.9)"><path d="M0 0v9" stroke="#333" stroke-width=".5"/><rect x="0" y="0" width="8" height="1.800" fill="#f58a23"/><rect x="0" y="1.800" width="8" height="1.800" fill="#f4f4f4"/><rect x="0" y="3.600" width="8" height="1.800" fill="#128a3a"/></g><rect x="56" y="24.5" width="9" height="5" fill="#c98a2a"/><rect x="64.5" y="17" width="1.3" height="3" fill="#d22"/><path d="M0 28L25 26.500 22 33 0 42z" fill="#3f5a2e"/><path d="M0 38L24 31.500 25.500 33 0 42.500z" fill="#d8c23a"/><ellipse cx="40" cy="42" rx="22" ry="2.5" fill="#d0cab8" opacity="0.55"/></g><g filter="url(#tc)"><g transform="translate(39.2 25.9) rotate(29.8) scale(-1.271 1.271)"><path d="M-15 -1L-15.500 -7 -14.500 -13 1.500 -13 5.500 -7 14 -6 15.500 -1z" fill="#1d1f23"/><path d="M-14.700 -13.400H1.700L2.500 -12H-14.900z" fill="#1d1f23"/><path d="M-12.800 -11.500h5.300v4h-5.800zM-5.800 -11.500h6.300l2.800 4h-9.100z" fill="#59606a"/><path d="M-14.500 -1.500a5.300 5.300 0 0 1 10.600 0zM4 -1.500a5.300 5.300 0 0 1 10.600 0z" fill="#18181a" opacity=".85"/><circle cx="-9.250" cy="0" r="4.700" fill="#18181a"/><circle cx="-9.250" cy="0" r="2.500" fill="#4a4b52"/><circle cx="9.250" cy="0" r="4.700" fill="#18181a"/><circle cx="9.250" cy="0" r="2.500" fill="#4a4b52"/></g></g><circle cx="5" cy="7.1" r="6.5" fill="#0c0c0c"/><path d="M-0.3 7.1h10.6M5 1.8v10.6" stroke="#ddd" stroke-width=".45"/><circle cx="5" cy="7.1" r=".9" fill="#e22"/><circle cx="8.5" cy="30.5" r="9.2" fill="none" stroke="#0e0e0e" stroke-width="2"/><path d="M-0.2 30.0L6.0 29.0h5L17.2 30.0v2.600L11.3 33.5L10.3 39.2h-3.600L5.7 33.5L-0.2 32.6z" fill="#3a3b3e"/><circle cx="8.5" cy="31.0" r="3.7" fill="#6e7074"/><circle cx="77.5" cy="11.8" r="7" fill="#26282a" opacity=".92"/><circle cx="77.5" cy="11.8" r="5.8" fill="none" stroke="#7d8586" stroke-width=".7" stroke-dasharray="1 .8"/><circle cx="78.0" cy="12.1" r="2.8" fill="#050505"/><circle cx="71" cy="24" r="4" fill="#6f746c" opacity=".82"/><path d="M69.4 23.2h1.200l1.500-1.200v4l-1.500-1.200h-1.200z" fill="#d8d8d8" opacity=".8"/><circle cx="60" cy="4.2" r="3.200" fill="#5f7488" opacity=".85"/><path d="M58.3 4.2h3.400" stroke="#dde" stroke-width="1"/><circle cx="68.5" cy="4.2" r="3.200" fill="#70757a" opacity=".85"/><rect x="66.9" y="3.1" width="3.200" height="2.200" fill="#d5d8da" opacity=".85"/><circle cx="15.5" cy="3.6" r="2.700" fill="#8a9096" opacity=".85"/><path d="M35.0 3h3.200M44.8 3h3.200" stroke="#f59a23" stroke-width=".8"/><path d="M41.5 1.3l1.700 3.100h-3.400z" fill="#e8484e"/></svg><span class="dur">2:36</span></div><div class="ttl" style="transform:scaleX(0.8713)">dollar Song Sidhu moose Modelled Mahindra Black Thar || Indian ...</div><svg class="hi" style="left:139px" viewBox="0 0 24 24"><path d="M2.800 21.200l1.200-5.400L16.800 3l4.200 4.200L8.200 20z" fill="none" stroke="#ddd" stroke-width="1.600"/><path d="M14 6.500l3.500 3.500" stroke="#ddd" stroke-width="1.400"/></svg>
<svg class="hi" style="left:170px" viewBox="0 0 24 24"><path d="M3.800 3.800h16.400v16.400H3.800z" fill="none" stroke="#ddd" stroke-width="1.600"/><path d="M8 17v-6M12 17V7M16 17v-3" stroke="#ddd" stroke-width="2"/></svg>
<svg class="hi" style="left:202px" viewBox="0 0 24 24"><path d="M3.800 3.800h16.400v17l-4-3.600H3.800z" fill="none" stroke="#ddd" stroke-width="1.600"/><path d="M7 8.500h10M7 12.500h6" stroke="#ddd" stroke-width="1.600"/></svg>
<svg class="hi" style="left:233px" viewBox="0 0 24 24"><path d="M16.500 7.200H10.700a2.650 2.650 0 0 0 0 5.300h2.600a2.650 2.650 0 0 1 0 5.300H7.500M12 3.300v3.900M12 17.800v3.900" fill="none" stroke="#ddd" stroke-width="1.600"/><path d="M10.300 5.200L12 3l1.700 2.200zM10.300 19.800L12 22l1.700-2.200z" fill="#ddd"/></svg>
<svg class="hi" style="left:264px" viewBox="0 0 24 24"><circle cx="12" cy="5.500" r="1.700" fill="#eee"/><circle cx="12" cy="12" r="1.700" fill="#eee"/><circle cx="12" cy="18.500" r="1.700" fill="#eee"/></svg>
<svg class="ic-globe" viewBox="0 0 24 24"><circle cx="12" cy="12" r="9.3" fill="none" stroke="#c8c8c8" stroke-width="1.4"/><path d="M5 7.5c2 .5 3.5 1.5 3.5 3.5s2 1.5 2 3.5-1 2.5-.5 6M14 3.2c-.5 2 .5 3 2 3.500s3 2 1.500 3.500-3.500 0-3.500 2 2.500 2 3 4.500" fill="none" stroke="#c8c8c8" stroke-width="1.3"/></svg><span class="c vis">Public</span><svg class="ic-dol" viewBox="0 0 24 24"><path d="M16.500 7.200H10.700a2.650 2.650 0 0 0 0 5.300h2.600a2.650 2.650 0 0 1 0 5.300H7.500M12 3.300v3.900M12 17.800v3.900" fill="none" stroke="#2ba640" stroke-width="1.600"/><path d="M10.300 5.200L12 3l1.700 2.200zM10.300 19.800L12 22l1.700-2.200z" fill="#2ba640"/></svg><span class="c mon">On</span><svg class="chev" style="left:470.500px" viewBox="0 0 12 12"><path d="M2.500 4.200l3.500 3.500 3.500-3.500" fill="none" stroke="#aaa" stroke-width="1.100"/></svg><svg class="chev" style="left:572px" viewBox="0 0 12 12"><path d="M2.500 4.200l3.500 3.500 3.500-3.500" fill="none" stroke="#aaa" stroke-width="1.100"/></svg><span class="c res">None</span><span class="c date">13 Apr 2024</span><span class="s pub">Published</span><span class="c r views">12,631</span><span class="c r com blue">4</span><span class="c r pct">70.7%</span><span class="s r lk">41 likes</span><span class="bar"><i style="width:70.7%"></i></span></div>
<div class="row" style="top:640.67px"><i class="rl" style="top:-0.67px"></i><span class="cb"></span><div class="th"><svg viewBox="0 0 80 45" preserveAspectRatio="none"><defs><linearGradient id="s8" x1="0" y1="0" x2="0" y2="1"><stop offset="0" stop-color="#5aaeea"/><stop offset="1" stop-color="#f8fcfe"/></linearGradient><linearGradient id="g8" x1="0" y1="0" x2="0" y2="1"><stop offset="0" stop-color="#8c8a5c"/><stop offset="1" stop-color="#a39a72"/></linearGradient></defs><g filter="url(#tb)"><rect x="0" y="0" width="80" height="28" fill="url(#s8)"/><rect x="0" y="28" width="80" height="17" fill="url(#g8)"/><ellipse cx="48" cy="10" rx="20" ry="7" fill="#ffffff" opacity="0.95"/><ellipse cx="66" cy="22" rx="14" ry="6" fill="#ffffff" opacity="0.95"/><ellipse cx="14" cy="4" rx="8" ry="3" fill="#a8d6f3" opacity="0.7"/><path d="M0 14L8 11 19 20 19 30 0 30z" fill="#b9b9aa"/><rect x="63.4" y="28.5" width="16.6" height="3.5" fill="#3a78b8"/><path d="M24.3 8.5L27.4 17.1L25.9 17.1L28.9 25.6L27.1 25.6L29.8 33L18.8 33L21.6 25.6L19.7 25.6L22.7 17.1L21.2 17.1z" fill="#3f6b2c"/><path d="M17 20L18.7 24.9L17.9 24.9L19.5 29.8L18.5 29.8L20.0 34L14.0 34L15.5 29.8L14.5 29.8L16.1 24.9L15.3 24.9z" fill="#4a7a34"/><path d="M56.4 12.4L58.5 18.2L57.5 18.2L59.5 24.0L58.3 24.0L60.1 29L52.6 29L54.5 24.0L53.2 24.0L55.3 18.2L54.3 18.2z" fill="#3f6b2c"/><ellipse cx="60" cy="27" rx="3" ry="3" fill="#4a7a34"/><path d="M0 40L22 31 60 30 80 33V45H0z" fill="#8c8a5c"/><path d="M20 40L60 31 66 33 34 45H22z" fill="#a8a074" opacity="0.7"/><path d="M40 45L70 33 80 34V45z" fill="#6f6d48" opacity="0.7"/></g><g filter="url(#tc)"><g transform="translate(39.8 29.6) rotate(1.8) scale(-1.233 1.233)"><path d="M-15 -1L-15.500 -7 -14.500 -13 1.500 -13 5.500 -7 14 -6 15.500 -1z" fill="#25272a"/><path d="M-14.700 -13.400H1.700L2.500 -12H-14.900z" fill="#25272a"/><path d="M-12.800 -11.500h5.300v4h-5.800zM-5.800 -11.500h6.300l2.800 4h-9.100z" fill="#7a8088"/><path d="M-14.500 -1.500a5.300 5.300 0 0 1 10.600 0zM4 -1.500a5.300 5.300 0 0 1 10.600 0z" fill="#18181a" opacity=".85"/><circle cx="-9.250" cy="0" r="4.700" fill="#18181a"/><circle cx="-9.250" cy="0" r="2.500" fill="#55575a"/><circle cx="9.250" cy="0" r="4.700" fill="#18181a"/><circle cx="9.250" cy="0" r="2.500" fill="#55575a"/></g><g transform="translate(33 8.5) rotate(-25) scale(0.95)"><path d="M0 0v9" stroke="#333" stroke-width=".5"/><rect x="0" y="0" width="8" height="1.800" fill="#f58a23"/><rect x="0" y="1.800" width="8" height="1.800" fill="#f4f4f4"/><rect x="0" y="3.600" width="8" height="1.800" fill="#128a3a"/></g></g><circle cx="4.4" cy="7.1" r="6.5" fill="#0c0c0c"/><path d="M-0.9 7.1h10.6M4.4 1.8v10.6" stroke="#ddd" stroke-width=".45"/><circle cx="4.4" cy="7.1" r=".9" fill="#e22"/><circle cx="7.4" cy="32.2" r="8.8" fill="none" stroke="#0e0e0e" stroke-width="2"/><path d="M-0.9 31.700000000000003L4.9 30.7h5L15.7 31.700000000000003v2.600L10.2 35.2L9.2 40.5h-3.600L4.6 35.2L-0.9 34.3z" fill="#3a3b3e"/><circle cx="7.4" cy="32.7" r="3.5" fill="#6e7074"/><circle cx="78" cy="13" r="7" fill="#26282a" opacity=".92"/><circle cx="78" cy="13" r="5.8" fill="none" stroke="#7d8586" stroke-width=".7" stroke-dasharray="1 .8"/><circle cx="78.5" cy="13.3" r="2.8" fill="#050505"/><circle cx="71" cy="25.8" r="4" fill="#6f746c" opacity=".82"/><path d="M69.4 25.0h1.200l1.500-1.200v4l-1.500-1.200h-1.200z" fill="#d8d8d8" opacity=".8"/><circle cx="59.5" cy="4.6" r="3.200" fill="#5f7488" opacity=".85"/><path d="M57.8 4.6h3.400" stroke="#dde" stroke-width="1"/><circle cx="68.5" cy="4.6" r="3.200" fill="#70757a" opacity=".85"/><rect x="66.9" y="3.5" width="3.200" height="2.200" fill="#d5d8da" opacity=".85"/><circle cx="14" cy="4.2" r="2.700" fill="#8a9096" opacity=".85"/><path d="M34.0 3.6h3.200M43.8 3.6h3.200" stroke="#f59a23" stroke-width=".8"/><path d="M40.5 1.9l1.700 3.100h-3.400z" fill="#e8484e"/></svg><span class="dur">3:36</span></div><div class="ttl" style="transform:scaleX(0.8161)">Long Jump Red Thar Indian Cars Driving 3D2023 || Indian Cars Dr...</div><div class="d1">Indian Cars Driving 3D2023 || Indian Cars Driving 3D || #game #viral</div><div class="d2">#trending #tractor #new #stunt #gameplay #bharat #shortvideo...</div><svg class="ic-globe" viewBox="0 0 24 24"><circle cx="12" cy="12" r="9.3" fill="none" stroke="#c8c8c8" stroke-width="1.4"/><path d="M5 7.5c2 .5 3.5 1.5 3.5 3.5s2 1.5 2 3.5-1 2.5-.5 6M14 3.2c-.5 2 .5 3 2 3.500s3 2 1.500 3.500-3.500 0-3.500 2 2.500 2 3 4.500" fill="none" stroke="#c8c8c8" stroke-width="1.3"/></svg><span class="c vis">Public</span><svg class="ic-dol" viewBox="0 0 24 24"><path d="M16.500 7.200H10.700a2.650 2.650 0 0 0 0 5.300h2.600a2.650 2.650 0 0 1 0 5.300H7.500M12 3.300v3.900M12 17.800v3.900" fill="none" stroke="#2ba640" stroke-width="1.600"/><path d="M10.300 5.200L12 3l1.700 2.200zM10.300 19.800L12 22l1.700-2.200z" fill="#2ba640"/></svg><span class="c mon">On</span><span class="c res">None</span><span class="c date">24 Mar 2024</span><span class="s pub">Published</span><span class="c r views">7,885</span><span class="c r com">0</span><span class="c r pct">66.7%</span><span class="s r lk">22 likes</span><span class="bar"><i style="width:66.7%"></i></span></div>
<div class="row" style="top:697.00px"><i class="rl" style="top:-1.00px"></i><span class="cb"></span><div class="th"><svg viewBox="0 0 80 45" preserveAspectRatio="none"><defs><linearGradient id="s9" x1="0" y1="0" x2="0" y2="1"><stop offset="0" stop-color="#5aaeea"/><stop offset="1" stop-color="#ffffff"/></linearGradient><linearGradient id="g9" x1="0" y1="0" x2="0" y2="1"><stop offset="0" stop-color="#8f9c5e"/><stop offset="1" stop-color="#8a9858"/></linearGradient></defs><g filter="url(#tb)"><rect x="0" y="0" width="80" height="23" fill="url(#s9)"/><rect x="0" y="22" width="80" height="23" fill="url(#g9)"/><ellipse cx="34" cy="8" rx="18" ry="4.5" fill="#ffffff" opacity="0.9"/><ellipse cx="62" cy="15" rx="16" ry="5" fill="#ffffff" opacity="0.95"/><ellipse cx="10" cy="14" rx="10" ry="4" fill="#ffffff" opacity="0.9"/><rect x="62" y="19" width="18" height="2.5" fill="#3f7fc0"/><path d="M44 22L52 14.400 62 16 68 24 64 29 48 28z" fill="#cbc3ab"/><path d="M0 26L10 19 27 14.400 44 20 80 24V45H0z" fill="#8f9c5e"/><path d="M0 30L24 24 40 34 30 45H0z" fill="#55663a" opacity="0.75"/><path d="M40 45L56 32 80 30V45z" fill="#9fa868" opacity="0.8"/><ellipse cx="72" cy="26" rx="5" ry="3" fill="#7ab04a"/></g><g filter="url(#tc)"><g transform="translate(36.2 26.4) rotate(36.3) scale(-1.214 1.214)"><path d="M-15 -1L-15.500 -7 -14.500 -13 1.500 -13 5.500 -7 14 -6 15.500 -1z" fill="#25a23c"/><path d="M-14.700 -13.400H1.700L2.500 -12H-14.900z" fill="#1c6a2a"/><path d="M-12.800 -11.500h5.300v4h-5.800zM-5.800 -11.500h6.300l2.800 4h-9.100z" fill="#8a9a90"/><path d="M-14.500 -1.500a5.300 5.300 0 0 1 10.600 0zM4 -1.500a5.300 5.300 0 0 1 10.600 0z" fill="#18181a" opacity=".85"/><circle cx="-9.250" cy="0" r="4.700" fill="#18181a"/><circle cx="-9.250" cy="0" r="2.500" fill="#e4e6e8"/><circle cx="9.250" cy="0" r="4.700" fill="#18181a"/><circle cx="9.250" cy="0" r="2.500" fill="#e4e6e8"/></g><g transform="translate(42.5 9.5) rotate(32) scale(0.95)"><path d="M0 0v9" stroke="#333" stroke-width=".5"/><rect x="0" y="0" width="8" height="1.800" fill="#f58a23"/><rect x="0" y="1.800" width="8" height="1.800" fill="#f4f4f4"/><rect x="0" y="3.600" width="8" height="1.800" fill="#128a3a"/></g></g><circle cx="4.4" cy="6.3" r="6.5" fill="#0c0c0c"/><path d="M-0.9 6.3h10.6M4.4 1.0v10.6" stroke="#ddd" stroke-width=".45"/><circle cx="4.4" cy="6.3" r=".9" fill="#e22"/><circle cx="6.8" cy="29.6" r="9.2" fill="none" stroke="#0e0e0e" stroke-width="2"/><path d="M-1.9 29.1L4.3 28.1h5L15.5 29.1v2.600L9.6 32.6L8.6 38.3h-3.600L4.0 32.6L-1.9 31.7z" fill="#3a3b3e"/><circle cx="6.8" cy="30.1" r="3.7" fill="#6e7074"/><circle cx="78" cy="12" r="7.5" fill="#26282a" opacity=".92"/><circle cx="78" cy="12" r="6.3" fill="none" stroke="#7d8586" stroke-width=".7" stroke-dasharray="1 .8"/><circle cx="78.5" cy="12.3" r="3.0" fill="#050505"/><circle cx="70.4" cy="23.2" r="4" fill="#6f746c" opacity=".82"/><path d="M68.8 22.4h1.200l1.500-1.200v4l-1.500-1.200h-1.200z" fill="#d8d8d8" opacity=".8"/><circle cx="59" cy="3.8" r="3.200" fill="#5f7488" opacity=".85"/><path d="M57.3 3.8h3.400" stroke="#dde" stroke-width="1"/><circle cx="68" cy="3.8" r="3.200" fill="#70757a" opacity=".85"/><rect x="66.4" y="2.7" width="3.200" height="2.200" fill="#d5d8da" opacity=".85"/><circle cx="14" cy="3.4" r="2.700" fill="#8a9096" opacity=".85"/><path d="M34.0 2.6h3.200M43.8 2.6h3.200" stroke="#f59a23" stroke-width=".8"/><path d="M40.5 0.9l1.700 3.100h-3.400z" fill="#e8484e"/></svg><span class="dur">1:14</span></div><div class="ttl" style="transform:scaleX(0.8161)">Long Jump Red Thar Indian Cars Driving 3D2023 || Indian Cars Dr...</div><div class="d1">Indian Cars Driving 3D2023 || Indian Cars Driving 3D || #game #viral</div><div class="d2">#trending #tractor #new #stunt #gameplay #bharat #shortvideo...</div><svg class="ic-globe" viewBox="0 0 24 24"><circle cx="12" cy="12" r="9.3" fill="none" stroke="#c8c8c8" stroke-width="1.4"/><path d="M5 7.5c2 .5 3.5 1.5 3.5 3.5s2 1.5 2 3.5-1 2.5-.5 6M14 3.2c-.5 2 .5 3 2 3.500s3 2 1.500 3.500-3.500 0-3.500 2 2.500 2 3 4.500" fill="none" stroke="#c8c8c8" stroke-width="1.3"/></svg><span class="c vis">Public</span><svg class="ic-dol" viewBox="0 0 24 24"><path d="M16.500 7.200H10.700a2.650 2.650 0 0 0 0 5.300h2.600a2.650 2.650 0 0 1 0 5.300H7.500M12 3.300v3.900M12 17.800v3.900" fill="none" stroke="#2ba640" stroke-width="1.600"/><path d="M10.300 5.200L12 3l1.700 2.200zM10.300 19.800L12 22l1.700-2.200z" fill="#2ba640"/></svg><span class="c mon">On</span><span class="c res">None</span><span class="c date">20 Jun 2024</span><span class="s pub">Published</span><span class="c r views">7,243</span><span class="c r com">0</span><span class="c r pct">78.9%</span><span class="s r lk">15 likes</span><span class="bar"><i style="width:78.9%"></i></span></div>
<div class="row" style="top:753.33px"><i class="rl" style="top:-0.33px"></i><span class="cb"></span><div class="th"><svg viewBox="0 0 80 45" preserveAspectRatio="none"><defs><linearGradient id="s10" x1="0" y1="0" x2="0" y2="1"><stop offset="0" stop-color="#ffffff"/><stop offset="1" stop-color="#ffffff"/></linearGradient><linearGradient id="g10" x1="0" y1="0" x2="0" y2="1"><stop offset="0" stop-color="#b9b1a0"/><stop offset="1" stop-color="#cbc4b4"/></linearGradient></defs><g filter="url(#tb)"><rect x="0" y="0" width="80" height="30" fill="url(#s10)"/><rect x="0" y="28.5" width="80" height="16.5" fill="url(#g10)"/><ellipse cx="26" cy="6" rx="6" ry="4.5" fill="#7cc0f0"/><ellipse cx="36" cy="3" rx="5" ry="2.5" fill="#bfe0f5"/><ellipse cx="8" cy="12" rx="4" ry="3" fill="#d8ecf9"/><ellipse cx="16.7" cy="15" rx="6.3" ry="8.5" fill="#86c058"/><ellipse cx="15" cy="21" rx="5" ry="3.5" fill="#6fa848"/><ellipse cx="34.5" cy="27" rx="1.5" ry="2" fill="#7ab050"/><rect x="0" y="27.7" width="80" height="2.3" fill="#9ab070"/><rect x="25.5" y="26" width="7.5" height="4" fill="#ececec"/><rect x="26" y="28.5" width="6.5" height="1.5" fill="#555"/><path d="M18 33.500H46V36H20z" fill="#5c5648" opacity="0.75"/><ellipse cx="30" cy="42" rx="22" ry="2.5" fill="#ddd7c8" opacity="0.6"/></g><g filter="url(#tc)"><g transform="translate(38.9 26.2) rotate(43.0) scale(-1.205 1.205)"><path d="M-15 -1L-15.500 -7 -14.500 -13 1.500 -13 5.500 -7 14 -6 15.500 -1z" fill="#f3f4f5"/><path d="M-14.700 -13.400H1.700L2.500 -12H-14.900z" fill="#1a1a1c"/><path d="M-12.800 -11.500h5.300v4h-5.800zM-5.800 -11.500h6.300l2.800 4h-9.100z" fill="#3c4048"/><path d="M-14.500 -1.500a5.300 5.300 0 0 1 10.600 0zM4 -1.500a5.300 5.300 0 0 1 10.600 0z" fill="#18181a" opacity=".85"/><circle cx="-9.250" cy="0" r="4.700" fill="#18181a"/><circle cx="-9.250" cy="0" r="2.500" fill="#4a4b4e"/><circle cx="9.250" cy="0" r="4.700" fill="#18181a"/><circle cx="9.250" cy="0" r="2.500" fill="#4a4b4e"/></g></g><circle cx="6.8" cy="6.9" r="6.5" fill="#0c0c0c"/><path d="M1.5 6.9h10.6M6.8 1.6v10.6" stroke="#ddd" stroke-width=".45"/><circle cx="6.8" cy="6.9" r=".9" fill="#e22"/><circle cx="9.7" cy="30.3" r="8.8" fill="none" stroke="#0e0e0e" stroke-width="2"/><path d="M1.4 29.8L7.2 28.8h5L18.0 29.8v2.600L12.5 33.3L11.5 38.6h-3.600L6.9 33.3L1.4 32.4z" fill="#3a3b3e"/><circle cx="9.7" cy="30.8" r="3.5" fill="#6e7074"/><circle cx="78.6" cy="11.6" r="7" fill="#26282a" opacity=".92"/><circle cx="78.6" cy="11.6" r="5.8" fill="none" stroke="#7d8586" stroke-width=".7" stroke-dasharray="1 .8"/><circle cx="79.1" cy="11.9" r="2.8" fill="#050505"/><circle cx="72.2" cy="24.4" r="4.5" fill="#6f746c" opacity=".82"/><path d="M70.6 23.6h1.200l1.500-1.200v4l-1.500-1.200h-1.200z" fill="#d8d8d8" opacity=".8"/><circle cx="60.5" cy="4.2" r="3.200" fill="#5f7488" opacity=".85"/><path d="M58.8 4.2h3.400" stroke="#dde" stroke-width="1"/><circle cx="69.5" cy="4.2" r="3.200" fill="#70757a" opacity=".85"/><rect x="67.9" y="3.1" width="3.200" height="2.200" fill="#d5d8da" opacity=".85"/><circle cx="16.5" cy="3.8" r="2.700" fill="#8a9096" opacity=".85"/><path d="M35.5 3h3.200M45.3 3h3.200" stroke="#f59a23" stroke-width=".8"/><path d="M42 1.3l1.700 3.100h-3.400z" fill="#e8484e"/></svg><span class="dur">2:48</span></div><div class="ttl" style="transform:scaleX(0.8161)">Long Jump Red Thar Indian Cars Driving 3D2023 || Indian Cars Dr...</div><div class="d1">Indian Cars Driving 3D2023 || Indian Cars Driving 3D || #game #viral</div><div class="d2">#trending #tractor #new #stunt #gameplay #bharat #shortvideo...</div><svg class="ic-globe" viewBox="0 0 24 24"><circle cx="12" cy="12" r="9.3" fill="none" stroke="#c8c8c8" stroke-width="1.4"/><path d="M5 7.5c2 .5 3.5 1.5 3.5 3.5s2 1.5 2 3.5-1 2.5-.5 6M14 3.2c-.5 2 .5 3 2 3.500s3 2 1.500 3.500-3.500 0-3.500 2 2.500 2 3 4.500" fill="none" stroke="#c8c8c8" stroke-width="1.3"/></svg><span class="c vis">Public</span><svg class="ic-dol" viewBox="0 0 24 24"><path d="M16.500 7.200H10.700a2.650 2.650 0 0 0 0 5.300h2.600a2.650 2.650 0 0 1 0 5.300H7.500M12 3.300v3.900M12 17.800v3.900" fill="none" stroke="#2ba640" stroke-width="1.600"/><path d="M10.300 5.200L12 3l1.700 2.200zM10.300 19.800L12 22l1.700-2.200z" fill="#2ba640"/></svg><span class="c mon">On</span><span class="c res">None</span><span class="c date">12 Mar 2024</span><span class="s pub">Published</span><span class="c r views">5,269</span><span class="c r com">1</span><span class="c r pct">72.0%</span><span class="s r lk">18 likes</span><span class="bar"><i style="width:72.0%"></i></span></div>
<div class="row" style="top:809.67px"><i class="rl" style="top:-0.67px"></i><span class="cb"></span><div class="th"><svg viewBox="0 0 80 45" preserveAspectRatio="none"><defs><linearGradient id="s11" x1="0" y1="0" x2="0" y2="1"><stop offset="0" stop-color="#3f9ae8"/><stop offset="1" stop-color="#a8d6f5"/></linearGradient><linearGradient id="g11" x1="0" y1="0" x2="0" y2="1"><stop offset="0" stop-color="#a2aa68"/><stop offset="1" stop-color="#98a058"/></linearGradient></defs><g filter="url(#tb)"><rect x="0" y="0" width="80" height="23" fill="url(#s11)"/><rect x="0" y="21.8" width="80" height="23.2" fill="url(#g11)"/><ellipse cx="40" cy="14" rx="34" ry="5" fill="#ffffff" opacity="0.95"/><ellipse cx="20" cy="9" rx="10" ry="3" fill="#ffffff" opacity="0.85"/><ellipse cx="62" cy="9" rx="9" ry="2.5" fill="#eaf5fc" opacity="0.85"/><rect x="0" y="20" width="80" height="2.3" fill="#d8e2d8" opacity="0.8"/><path d="M0 31H80V35.800H0z" fill="#cfc4a0" opacity="0.8"/></g><g filter="url(#tc)"><g transform="translate(37.8 27.6) rotate(28.0) scale(-1.071 1.071)"><path d="M-15 -1L-15.500 -7 -14.500 -13 1.500 -13 5.500 -7 14 -6 15.500 -1z" fill="#6a34d2"/><path d="M-14.700 -13.400H1.700L2.500 -12H-14.900z" fill="#3a2a70"/><path d="M-12.800 -11.500h5.300v4h-5.800zM-5.800 -11.500h6.300l2.800 4h-9.100z" fill="#cfd0e0"/><path d="M-14.500 -1.500a5.300 5.300 0 0 1 10.600 0zM4 -1.500a5.300 5.300 0 0 1 10.600 0z" fill="#18181a" opacity=".85"/><circle cx="-9.250" cy="0" r="4.700" fill="#18181a"/><circle cx="-9.250" cy="0" r="2.500" fill="#4a4b4e"/><circle cx="9.250" cy="0" r="4.700" fill="#18181a"/><circle cx="9.250" cy="0" r="2.500" fill="#4a4b4e"/></g><g transform="translate(40.5 13) rotate(28) scale(1.0)"><path d="M0 0v9" stroke="#333" stroke-width=".5"/><rect x="0" y="0" width="8" height="1.800" fill="#f58a23"/><rect x="0" y="1.800" width="8" height="1.800" fill="#f4f4f4"/><rect x="0" y="3.600" width="8" height="1.800" fill="#128a3a"/></g><path d="M39 38l6-2.500 8 1 3.500 6H39z" fill="#a98a6a"/></g><circle cx="9.1" cy="9.5" r="5.5" fill="#0c0c0c"/><path d="M4.8 9.5h8.6M9.1 5.2v8.6" stroke="#ddd" stroke-width=".45"/><circle cx="9.1" cy="9.5" r=".9" fill="#e22"/><circle cx="11.4" cy="29.4" r="7.800000000000001" fill="none" stroke="#0e0e0e" stroke-width="2"/><path d="M4.1 28.9L8.9 27.9h5L18.7 28.9v2.600L14.2 32.4L13.2 36.7h-3.600L8.6 32.4L4.1 31.5z" fill="#3a3b3e"/><circle cx="11.4" cy="29.9" r="3.2" fill="#6e7074"/><circle cx="72.2" cy="13.6" r="6.5" fill="#26282a" opacity=".92"/><circle cx="72.2" cy="13.6" r="5.3" fill="none" stroke="#7d8586" stroke-width=".7" stroke-dasharray="1 .8"/><circle cx="72.7" cy="13.9" r="2.6" fill="#050505"/><circle cx="65.8" cy="23.5" r="3.5" fill="#6f746c" opacity=".82"/><path d="M64.2 22.7h1.200l1.500-1.200v4l-1.500-1.200h-1.200z" fill="#d8d8d8" opacity=".8"/><circle cx="75" cy="23.5" r="3.5" fill="#6f746c" opacity=".82"/><path d="M73.4 22.7h1.200l1.500-1.200v4l-1.500-1.200h-1.200z" fill="#d8d8d8" opacity=".8"/><circle cx="56" cy="6.5" r="3.200" fill="#5f7488" opacity=".85"/><path d="M54.3 6.5h3.400" stroke="#dde" stroke-width="1"/><circle cx="63" cy="6.5" r="3.200" fill="#70757a" opacity=".85"/><rect x="61.4" y="5.4" width="3.200" height="2.200" fill="#d5d8da" opacity=".85"/><circle cx="18.5" cy="6.6" r="2.700" fill="#8a9096" opacity=".85"/><path d="M33.5 6h3.200M43.3 6h3.200" stroke="#f59a23" stroke-width=".8"/><path d="M40 4.3l1.700 3.100h-3.400z" fill="#e8484e"/><rect x="0" y="0" width="80" height="3" fill="#050505"/><rect x="0" y="42.2" width="80" height="2.8" fill="#050505"/></svg><span class="dur">1:13</span></div><div class="ttl" style="transform:scaleX(0.8161)">Long Jump Red Thar Indian Cars Driving 3D2023 || Indian Cars Dr...</div><div class="d1">Indian Cars Driving 3D2023 || Indian Cars Driving 3D || #game #viral</div><div class="d2">#trending #tractor #new #stunt #gameplay #bharat #shortvideo...</div><svg class="ic-globe" viewBox="0 0 24 24"><circle cx="12" cy="12" r="9.3" fill="none" stroke="#c8c8c8" stroke-width="1.4"/><path d="M5 7.5c2 .5 3.5 1.5 3.5 3.5s2 1.5 2 3.5-1 2.5-.5 6M14 3.2c-.5 2 .5 3 2 3.500s3 2 1.500 3.500-3.500 0-3.500 2 2.500 2 3 4.500" fill="none" stroke="#c8c8c8" stroke-width="1.3"/></svg><span class="c vis">Public</span><svg class="ic-dol" viewBox="0 0 24 24"><path d="M16.500 7.200H10.700a2.650 2.650 0 0 0 0 5.300h2.600a2.650 2.650 0 0 1 0 5.300H7.500M12 3.300v3.900M12 17.800v3.900" fill="none" stroke="#2ba640" stroke-width="1.600"/><path d="M10.300 5.200L12 3l1.700 2.200zM10.300 19.800L12 22l1.700-2.200z" fill="#2ba640"/></svg><span class="c mon">On</span><span class="c res">None</span><span class="c date">19 Jun 2024</span><span class="s pub">Published</span><span class="c r views">5,013</span><span class="c r com">0</span><span class="c r pct">94.1%</span><span class="s r lk">16 likes</span><span class="bar"><i style="width:94.1%"></i></span></div>
<div class="row" style="top:866.00px"><i class="rl" style="top:-1.00px"></i><span class="cb"></span><div class="th"><svg viewBox="0 0 80 45" preserveAspectRatio="none"><defs><linearGradient id="s12" x1="0" y1="0" x2="0" y2="1"><stop offset="0" stop-color="#cfe8f8"/><stop offset="1" stop-color="#ffffff"/></linearGradient><linearGradient id="g12" x1="0" y1="0" x2="0" y2="1"><stop offset="0" stop-color="#6f8f3e"/><stop offset="1" stop-color="#7a9a48"/></linearGradient></defs><g filter="url(#tb)"><rect x="0" y="0" width="80" height="19" fill="url(#s12)"/><rect x="0" y="21" width="80" height="24" fill="url(#g12)"/><ellipse cx="12" cy="8" rx="8" ry="3" fill="#6db8ec"/><ellipse cx="10" cy="14" rx="9" ry="3" fill="#ffffff"/><ellipse cx="26" cy="9" rx="8.5" ry="10" fill="#7fae3e"/><ellipse cx="27" cy="17" rx="5" ry="4" fill="#6a9a36"/><rect x="26.5" y="16" width="1.2" height="6" fill="#5a4a30"/><path d="M39.800 0H80V9.800H44L37 11z" fill="#c9a253"/><path d="M37 9.800H74V25H37z" fill="#f0ead8"/><rect x="50.5" y="13" width="7.5" height="9.5" fill="#141414"/><rect x="61" y="13.5" width="9" height="4" fill="#2a2a2a"/><rect x="39.5" y="12" width="3.5" height="4" fill="#8a8a84"/><rect x="45" y="9.8" width="1" height="12" fill="#ffffff"/><rect x="59" y="9.8" width="1" height="14" fill="#ffffff"/><path d="M37 22H74V26H37z" fill="#d8b878" opacity="0.8"/><rect x="0" y="16" width="8" height="4" fill="#e0a028"/><rect x="8" y="16" width="13" height="4" fill="#a8adb2"/><rect x="21.5" y="15.5" width="10.5" height="5" fill="#c0503a"/><rect x="0" y="20" width="28" height="1.8" fill="#d8d0b8"/></g><g filter="url(#tc)"><path d="M23.400 27L25 22 33 19.500 34 15.500H46L48 18.500 50.500 20V30L46 32.500H28z" fill="#d9202b"/><path d="M34.800 16.300H45.500L46.500 19.500H34z" fill="#5a6068"/><rect x="25.5" y="22.5" width="6" height="4" fill="#2a1a1a"/><path d="M25 22l3 5 4-5" fill="none"/><ellipse cx="38.5" cy="28.7" rx="4.6" ry="5" fill="#1a1a1c"/><ellipse cx="38.5" cy="28.7" rx="2.3" ry="2.6" fill="#77797c"/><ellipse cx="48.5" cy="27" rx="2.3" ry="4.5" fill="#1a1a1c"/><ellipse cx="27" cy="30" rx="2.6" ry="3.5" fill="#1a1a1c"/></g><circle cx="4.4" cy="7.3" r="6.5" fill="#0c0c0c"/><path d="M-0.9 7.3h10.6M4.4 2.0v10.6" stroke="#ddd" stroke-width=".45"/><circle cx="4.4" cy="7.3" r=".9" fill="#e22"/><circle cx="7" cy="30.6" r="8.8" fill="none" stroke="#0e0e0e" stroke-width="2"/><path d="M-1.3 30.1L4.5 29.1h5L15.3 30.1v2.600L9.8 33.6L8.8 38.9h-3.600L4.2 33.6L-1.3 32.7z" fill="#3a3b3e"/><circle cx="7" cy="31.1" r="3.5" fill="#6e7074"/><circle cx="77" cy="12.3" r="7" fill="#26282a" opacity=".92"/><circle cx="77" cy="12.3" r="5.8" fill="none" stroke="#7d8586" stroke-width=".7" stroke-dasharray="1 .8"/><circle cx="77.5" cy="12.6" r="2.8" fill="#050505"/><circle cx="69" cy="24.5" r="4" fill="#6f746c" opacity=".82"/><path d="M67.4 23.7h1.200l1.500-1.200v4l-1.500-1.200h-1.200z" fill="#d8d8d8" opacity=".8"/><circle cx="57.5" cy="4.2" r="3.200" fill="#5f7488" opacity=".85"/><path d="M55.8 4.2h3.400" stroke="#dde" stroke-width="1"/><circle cx="66" cy="4.2" r="3.200" fill="#70757a" opacity=".85"/><rect x="64.4" y="3.1" width="3.200" height="2.200" fill="#d5d8da" opacity=".85"/><circle cx="13" cy="3.8" r="2.700" fill="#8a9096" opacity=".85"/><path d="M31.0 3h3.200M40.8 3h3.200" stroke="#f59a23" stroke-width=".8"/><path d="M37.5 1.3l1.700 3.100h-3.400z" fill="#e8484e"/></svg><span class="dur">1:14</span></div><div class="ttl" style="transform:scaleX(0.8193)">Dollar song sidhu musewala real Indian new model red thar offro...</div><div class="d1">Indian Cars Driving 3D2023 || Indian Cars Driving 3D || #game #viral</div><div class="d2">#trending #tractor #new #stunt #gameplay #bharat #shortvideo...</div><svg class="ic-globe" viewBox="0 0 24 24"><circle cx="12" cy="12" r="9.3" fill="none" stroke="#c8c8c8" stroke-width="1.4"/><path d="M5 7.5c2 .5 3.5 1.5 3.5 3.5s2 1.5 2 3.5-1 2.5-.5 6M14 3.2c-.5 2 .5 3 2 3.500s3 2 1.500 3.500-3.500 0-3.500 2 2.500 2 3 4.500" fill="none" stroke="#c8c8c8" stroke-width="1.3"/></svg><span class="c vis">Public</span><svg class="ic-dol" viewBox="0 0 24 24"><path d="M16.500 7.200H10.700a2.650 2.650 0 0 0 0 5.300h2.600a2.650 2.650 0 0 1 0 5.300H7.500M12 3.300v3.900M12 17.800v3.900" fill="none" stroke="#2ba640" stroke-width="1.600"/><path d="M10.300 5.200L12 3l1.700 2.200zM10.300 19.800L12 22l1.700-2.200z" fill="#2ba640"/></svg><span class="c mon">On</span><span class="c res">None</span><span class="c date">5 Mar 2024</span><span class="s pub">Published</span><span class="c r views">4,905</span><span class="c r com">0</span><span class="c r pct">71.4%</span><span class="s r lk">5 likes</span><span class="bar"><i style="width:71.4%"></i></span></div>
<div id="sbtrack"></div>
<svg class="abs" style="left:1320px;top:50px;width:9px;height:6px" viewBox="0 0 9 6"><path d="M4.500 2L7.200 5H1.800z" fill="#808080"/></svg>
<div id="sbthumb"></div>
<div id="wm1">Activate Windows</div>
<div id="wm2">Go to Settings to activate Windows.</div>
</body></html>
